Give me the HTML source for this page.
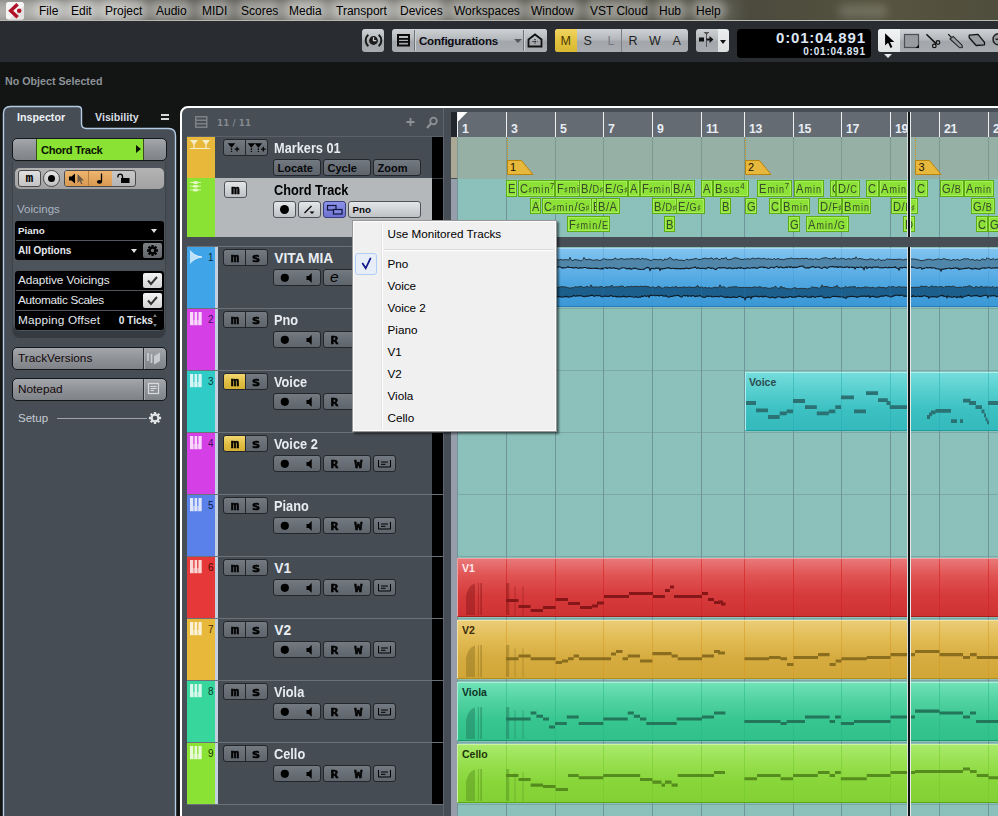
<!DOCTYPE html>
<html><head><meta charset="utf-8"><title>Cubase</title>
<style>
*{box-sizing:border-box}
html,body{margin:0;padding:0}
body{width:998px;height:816px;overflow:hidden;background:#131514;position:relative;font-family:"Liberation Sans",sans-serif;font-size:12px;color:#000}
.a{position:absolute}
.t{position:absolute;white-space:nowrap;line-height:1}
#menubar{left:0;top:0;width:998px;height:20px;background:linear-gradient(90deg,#3a3932,#45443a 40%,#4b4a3d 75%,#56543f 90%,#4f4d3c);overflow:hidden}
#menubar .glow{position:absolute;top:0px;height:20px;border-radius:9px;background:rgba(255,255,255,.36);filter:blur(4px)}
#menubar .mi{position:absolute;top:5px;font-size:12px;color:#000;white-space:nowrap;line-height:1}
#toolbar{left:0;top:21px;width:998px;height:41px;background:#292c30}
.tb{position:absolute;border-radius:3px;background:linear-gradient(#cfd2d5,#b4b8bc 45%,#a3a7ab 55%,#a9adb1)}

#insp{left:0;top:100px;width:180px;height:716px}
.ibtn{position:absolute;left:12px;width:155px;height:23px;border-radius:5px;border:1px solid #15181b;background:linear-gradient(#a3a7ab,#8d9195 55%,#7f8387)}
.blk{position:absolute;left:15px;width:149px;background:#000;border-radius:3px}
.wl{color:#e4e8ee}

#tl{left:180px;top:106px;width:270px;height:720px}
.row{position:absolute;left:7px;width:258px}
.sb{position:absolute;height:17px;border-radius:3px;border:1px solid #23272b;background:linear-gradient(#747a81,#6a7077 40%,#5f656c)}
.lb{position:absolute;height:17px;border-radius:3px;border:1px solid #50545a;background:linear-gradient(#e4e6e8,#bfc2c5)}
.pix{font-family:"DejaVu Sans","Liberation Sans",sans-serif;font-weight:bold;color:#000;position:absolute;line-height:1;white-space:nowrap}
.tn{position:absolute;left:274.300px;font-size:13.800px;font-weight:bold;color:#e8ecf1;white-space:nowrap;line-height:1;display:inline-block}
.g{-webkit-text-stroke:.45px #000;position:absolute;font-family:"DejaVu Sans Mono","Liberation Mono",monospace;font-weight:bold;color:#000;line-height:1;white-space:nowrap;text-align:center}
.num{position:absolute;font-size:10px;line-height:1;white-space:nowrap}

#ev{left:451px;top:108px;width:547px;height:708px;overflow:hidden}
.ch{position:absolute;height:16.300px;background:#8ce236;border:1px solid #5cac12;box-shadow:inset 0 0 0 1px #a6ee5c;overflow:hidden;white-space:nowrap;color:#3a4a2c;font-size:12.800px;line-height:15px;padding-left:1px}
.ch b{font-weight:normal;display:inline-block;transform:scaleX(.87);transform-origin:0 50%;letter-spacing:.6px}
.ch small{font-size:10.300px;letter-spacing:1.300px;margin-left:.5px}
.ch u{text-decoration:none;font-size:10.500px}
.ch sup{font-size:9px;vertical-align:0;position:relative;top:-4px;line-height:0;margin-left:-.5px}
.ch i{font-style:normal;font-size:7.500px;position:relative;top:-1.500px;letter-spacing:0;margin:0 .5px 0 0}
.rn{position:absolute;top:122.500px;font-size:12.300px;letter-spacing:-.4px;font-weight:bold;color:#e8edf4;line-height:1;white-space:nowrap}
.pl{position:absolute;font-size:10.500px;font-weight:bold;line-height:1;white-space:nowrap}

#pop{left:352px;top:220px;width:205px;height:212px;background:#f0f0f0;border:1px solid #979797;box-shadow:inset 0 0 0 1px #fcfcfc,2px 2px 2px rgba(0,0,0,.5)}
.pi{position:absolute;left:387.500px;font-size:11.700px;color:#000;line-height:1;white-space:nowrap}
</style></head>
<body>
<div id="menubar" class="a"><div class="glow" style="left:-20px;width:760px;top:-4px;height:30px;background:linear-gradient(90deg,rgba(255,255,255,.62),rgba(255,255,255,.58) 18%,rgba(255,255,255,.26) 24%,rgba(255,255,255,.24) 36%,rgba(255,255,255,.46) 42%,rgba(255,255,255,.42) 58%,rgba(255,255,255,.22) 66%,rgba(255,255,255,.12) 85%,rgba(255,255,255,.1));filter:blur(7px)"></div><div class="glow" style="left:34px;width:28px"></div><div class="glow" style="left:66px;width:30px"></div><div class="glow" style="left:100px;width:47px"></div><div class="glow" style="left:151px;width:41px"></div><div class="glow" style="left:197px;width:35px"></div><div class="glow" style="left:236px;width:43px"></div><div class="glow" style="left:284px;width:41px"></div><div class="glow" style="left:331px;width:61px"></div><div class="glow" style="left:395px;width:50px"></div><div class="glow" style="left:449px;width:75px"></div><div class="glow" style="left:526px;width:55px"></div><div class="glow" style="left:585px;width:65px"></div><div class="glow" style="left:654px;width:33px"></div><div class="glow" style="left:691px;width:35px"></div><div class="glow" style="left:838px;width:50px;opacity:.45;top:4px;height:14px"></div><span class="mi" style="left:39px">File</span><span class="mi" style="left:71px">Edit</span><span class="mi" style="left:105px">Project</span><span class="mi" style="left:156px">Audio</span><span class="mi" style="left:202px">MIDI</span><span class="mi" style="left:241px">Scores</span><span class="mi" style="left:289px">Media</span><span class="mi" style="left:336px">Transport</span><span class="mi" style="left:400px">Devices</span><span class="mi" style="left:454px">Workspaces</span><span class="mi" style="left:531px">Window</span><span class="mi" style="left:590px">VST Cloud</span><span class="mi" style="left:659px">Hub</span><span class="mi" style="left:696px">Help</span><svg class="a" style="left:6px;top:2px" width="18" height="18" viewBox="0 0 18 18"><rect x="0" y="0" width="18" height="17.500" rx="2.500" fill="#f6f5f4"/><path d="M18 4V15a2.500 2.500 0 0 1-2.500 2.500H3z" fill="#e4e2e0"/><path d="M10.400 .9L2.200 8.700L10.400 16.500L12.800 14L7.200 8.700L12.800 3.400Z" fill="#b01228"/><circle cx="13.200" cy="8.700" r="2.300" fill="#b01228"/></svg></div><div class="a" style="left:0;top:20px;width:998px;height:1px;background:#b9b8b2"></div><div id="toolbar" class="a"><div class="tb" style="left:362px;top:8px;width:22px;height:23px;"><svg width="23" height="23" viewBox="0 0 23 23" class="a" style="left:0;top:0"><circle cx="11.500" cy="11.500" r="4.400" fill="#1a1a1a"/><path d="M11.500 8.300v3.400h2.800" stroke="#d0d0d0" stroke-width="1.300" fill="none"/><path d="M6.300 5.800a7.500 7.500 0 0 0 0 11.400M16.700 5.800a7.500 7.500 0 0 1 0 11.400" stroke="#1a1a1a" stroke-width="2" fill="none"/></svg></div><div class="tb" style="left:392px;top:8px;width:155px;height:23px;"></div><div class="a" style="left:414px;top:9px;width:1px;height:21px;background:#6f7377"></div><div class="a" style="left:415px;top:9px;width:1px;height:21px;background:#cfd2d5"></div><svg class="a" style="left:397px;top:13px" width="13" height="13" viewBox="0 0 13 13"><rect x="1" y="1" width="11" height="10.500" fill="none" stroke="#0c0c0c" stroke-width="2"/><rect x="1" y="4" width="11" height="1.800" fill="#0c0c0c"/><rect x="1" y="7" width="11" height="1.800" fill="#0c0c0c"/></svg><span class="t" style="left:419px;top:14px;font-size:11.6px;font-weight:bold;color:#0c0c14;letter-spacing:-.25px">Configurations</span><div class="a" style="left:514px;top:18px;border:4px solid transparent;border-top:4px solid #55585c;border-bottom:0"></div><div class="a" style="left:523px;top:9px;width:1px;height:21px;background:#6f7377"></div><div class="a" style="left:524px;top:9px;width:1px;height:21px;background:#cfd2d5"></div><div class="tb" style="left:525px;top:8px;width:22px;height:23px;"><svg width="22" height="21" viewBox="0 0 22 21" class="a" style="left:-1px;top:1px"><path d="M4.5 16.5V9.5L11 4.5l6.500 5v7z" fill="none" stroke="#111" stroke-width="1.8"/><path d="M11 9v5M8.500 11.500h5" stroke="#111" stroke-width="1.2" stroke-dasharray="1.2 1"/></svg></div><div class="tb" style="left:555px;top:8px;width:133px;height:23px;overflow:hidden"><div class="a" style="left:0;top:0;width:22px;height:23px;background:linear-gradient(#f0d560,#e3c440 50%,#d9b832)"></div><div class="a" style="left:66px;top:0;width:1px;height:23px;background:#7c8084"></div></div><span class="t" style="left:560.5px;top:13.500px;font-size:12.500px;color:#4a3a00">M</span><span class="t" style="left:583.5px;top:13.500px;font-size:12.500px;color:#222">S</span><span class="t" style="left:607.5px;top:13.500px;font-size:12.500px;color:#777b80">L</span><span class="t" style="left:628.5px;top:13.500px;font-size:12.500px;color:#222">R</span><span class="t" style="left:649px;top:13.500px;font-size:12.500px;color:#222">W</span><span class="t" style="left:672.5px;top:13.500px;font-size:12.500px;color:#222">A</span><div class="tb" style="left:696px;top:8px;width:23px;height:23px;border-radius:3px 0 0 3px"><svg width="21" height="21" viewBox="0 0 21 21" class="a" style="left:0;top:0"><path d="M10.500 3v15" stroke="#555" stroke-width="1"/><path d="M7.500 3h6l-3 3z" fill="#555"/><rect x="3" y="8.500" width="5" height="4" fill="#111"/><path d="M10.500 9.500h3V7l4 3.500l-4 3.500v-2.500h-3z" fill="#111"/></svg></div><div class="a" style="left:718px;top:8px;width:11px;height:23px;background:linear-gradient(#ecedee,#dcdee0);border-radius:0 3px 3px 0"></div><div class="a" style="left:720px;top:19px;border:3.500px solid transparent;border-top:4px solid #111;border-bottom:0"></div><div class="a" style="left:737px;top:8px;width:134px;height:29px;background:#000;border-radius:4px"></div><span class="t" style="right:133px;top:9.100px;font-size:15px;font-weight:bold;color:#dde6f4;letter-spacing:.8px;margin-right:-.8px">0:01:04.891</span><span class="t" style="right:133px;top:26.100px;font-size:10px;font-weight:bold;color:#dde6f4;letter-spacing:.78px;margin-right:-.8px">0:01:04.891</span><div class="tb" style="left:878px;top:8px;width:130px;height:23px;border-radius:3px 0 0 3px;overflow:hidden"><div class="a" style="left:0;top:0;width:22px;height:23px;background:linear-gradient(#f2f3f4,#e0e2e4)"></div></div><svg class="a" style="left:878px;top:8px" width="120" height="23" viewBox="0 0 120 23"><path d="M7.100 4.300v12.200l3-2.800 2.400 5.300 1.900-.9-2.400-5.100h4.300z" fill="#000"/><rect x="26.500" y="5.500" width="14" height="13" fill="#989ca0" stroke="#4c5054" stroke-width="1.200"/><path d="M41 15.500v3.500h-3.500z" fill="#0a0a0a"/><path d="M48.400 5.200L58 14.600" stroke="#111" stroke-width="1.500" fill="none"/><circle cx="56.300" cy="16.900" r="1.800" fill="none" stroke="#111" stroke-width="1.200"/><circle cx="60" cy="13.500" r="1.800" fill="none" stroke="#111" stroke-width="1.200"/><path d="M70.200 5.200l3.300 3.300" stroke="#111" stroke-width="1.200"/><path d="M72 10l3.200-2.600 8.800 8.800.3 2.300-2.600.3z" fill="#989ca0" stroke="#222" stroke-width="1.100"/><path d="M91.200 6.200l8.800-.9 6.500 8v2.500l-8.300.7-7-7.700z" fill="#989ca0" stroke="#111" stroke-width="1.300" stroke-linejoin="round"/><circle cx="120.600" cy="10.300" r="5.600" fill="#989ca0" stroke="#222" stroke-width="1.500"/><path d="M117.500 10.300h5" stroke="#222" stroke-width="1.500"/></svg><div class="a" style="left:884px;top:33px;border:4px solid transparent;border-top:4px solid #e8e8e8;border-bottom:0"></div></div><span class="t" style="left:5px;top:76px;font-size:10.7px;font-weight:bold;color:#8d9298">No Object Selected</span>
<div id="insp" class="a"><svg class="a" style="left:0;top:0" width="180" height="716" viewBox="0 0 180 716"><path d="M3.5 716V13.500Q3.5 6.500 10.500 6.500H78Q81.500 6.500 81.500 10V23.500Q81.500 28.500 86.500 28.500H168.500Q175.500 28.500 175.500 35.500V716" fill="#464d55" stroke="#b4cbe4" stroke-width="1.400"/></svg><span class="t" style="left:17px;top:12px;font-size:10.700px;font-weight:bold;color:#eef2f7">Inspector</span><span class="t" style="left:95px;top:12px;font-size:10.700px;font-weight:bold;color:#d6dbe2">Visibility</span><div class="a" style="left:161px;top:14px;width:8px;height:2px;background:#d8d8d8"></div><div class="a" style="left:161px;top:18px;width:8px;height:2px;background:#d8d8d8"></div><div class="ibtn" style="top:38px;overflow:hidden"><div class="a" style="left:23px;top:0;width:108px;height:21px;background:#8ae234;border-left:1px solid #3c4a20;border-right:1px solid #3c4a20"></div></div><span class="t" style="left:41px;top:44.800px;font-size:11.200px;letter-spacing:-.35px;font-weight:bold;color:#0a1400">Chord Track</span><div class="a" style="left:136px;top:45px;border:4px solid transparent;border-left:5px solid #0a1400;border-right:0"></div><div class="a" style="left:12px;top:62px;width:154px;height:176px;background:#4c535a;border-left:1px solid #3c4349;border-right:1px solid #3c4349;border-radius:0 0 7px 7px;box-shadow:inset 0 -7px 0 -0px #353b41"></div><div class="a" style="left:15px;top:68px;width:149px;height:21px;border-radius:5px;background:linear-gradient(#b3b3b3,#a2a2a2)"></div><div class="a" style="left:18px;top:70px;width:23px;height:17px;border-radius:3px;border:1px solid #4a4a4a;background:linear-gradient(#e0e0e0,#c4c4c4)"></div><span class="t" style="left:25.500px;top:70.500px;font-size:13px;font-weight:bold;color:#000;font-family:'DejaVu Sans Mono',monospace">m</span><div class="a" style="left:43px;top:70px;width:17px;height:17px;border-radius:9px;border:1px solid #4a4a4a;background:linear-gradient(#e6e6e6,#c0c0c0)"></div><div class="a" style="left:48px;top:75px;width:7px;height:7px;border-radius:4px;background:#000"></div><div class="a" style="left:64px;top:70px;width:72px;height:17px;border-radius:3px;border:1px solid #4a4a4a;background:linear-gradient(#c9c9c9,#b4b4b4);overflow:hidden"><div class="a" style="left:0;top:0;width:47px;height:15px;background:linear-gradient(#efb570,#d99a50)"></div><div class="a" style="left:23px;top:0;width:1px;height:15px;background:#b88040"></div></div><svg class="a" style="left:64px;top:70px" width="72" height="17" viewBox="0 0 72 17"><path d="M5 6.500h2.500l3.500-3v10l-3.500-3H5z" fill="#000"/><path d="M13.500 4v9l2.200-2 1.500 3.300 1.300-.6-1.500-3.200h3z" fill="#6b5a48"/><path d="M37.500 3.500v8" stroke="#000" stroke-width="1.300"/><ellipse cx="35.500" cy="11.800" rx="2.600" ry="1.900" fill="#000"/><rect x="57" y="8" width="8.500" height="5" fill="#000"/><path d="M58.500 8V6.500a2.300 2.300 0 0 0-4.600 0v1" fill="none" stroke="#000" stroke-width="1.300"/></svg><span class="t" style="left:17px;top:104px;font-size:11.5px;color:#aab4c2">Voicings</span><div class="blk" style="top:121px;height:39px"></div><div class="a" style="left:16px;top:140px;width:147px;height:1px;background:#50565c"></div><span class="t wl" style="left:18px;top:125.500px;font-size:9.800px;font-weight:bold">Piano</span><div class="a" style="left:151px;top:129px;border:3.500px solid transparent;border-top:4px solid #e0e0e0;border-bottom:0"></div><span class="t wl" style="left:18px;top:145.500px;font-size:10px;font-weight:bold">All Options</span><div class="a" style="left:131px;top:149px;border:3.500px solid transparent;border-top:4px solid #e0e0e0;border-bottom:0"></div><div class="a" style="left:143px;top:143px;width:19px;height:15px;border-radius:2px;background:linear-gradient(#7c8084,#64686c)"></div><svg class="a" style="left:0;top:0;overflow:visible" width="1" height="1"><path d="M155.50 150.50L158.00 150.50M154.62 152.62L156.39 154.39M152.50 153.50L152.50 156.00M150.38 152.62L148.61 154.39M149.50 150.50L147.00 150.50M150.38 148.38L148.61 146.61M152.50 147.50L152.50 145.00M154.62 148.38L156.39 146.61" stroke="#000" stroke-width="2.300" fill="none"/><circle cx="152.5" cy="150.5" r="2.80" fill="none" stroke="#000" stroke-width="2.200"/></svg><div class="blk" style="top:171px;height:59px"></div><div class="a" style="left:16px;top:190px;width:147px;height:1px;background:#50565c"></div><div class="a" style="left:16px;top:210px;width:147px;height:1px;background:#50565c"></div><span class="t wl" style="left:18px;top:175px;font-size:11.800px;letter-spacing:-.09px">Adaptive Voicings</span><span class="t wl" style="left:18px;top:195px;font-size:11.800px;letter-spacing:-.33px">Automatic Scales</span><span class="t wl" style="left:18px;top:215px;font-size:11.800px;letter-spacing:.17px">Mapping Offset</span><span class="t wl" style="right:27px;top:215.500px;font-size:10.200px;font-weight:bold">0 Ticks</span><div class="a" style="left:143px;top:173px;width:19px;height:15px;border-radius:2px;background:linear-gradient(#f4f4f4,#d4d4d4)"></div><svg class="a" style="left:143px;top:173px" width="19" height="15" viewBox="0 0 19 15"><path d="M5 7.500l3 3.500 6-7" fill="none" stroke="#333" stroke-width="2"/></svg><div class="a" style="left:143px;top:193px;width:19px;height:15px;border-radius:2px;background:linear-gradient(#f4f4f4,#d4d4d4)"></div><svg class="a" style="left:143px;top:193px" width="19" height="15" viewBox="0 0 19 15"><path d="M5 7.500l3 3.500 6-7" fill="none" stroke="#333" stroke-width="2"/></svg><div class="a" style="left:153px;top:214px;border:2.500px solid transparent;border-bottom:3px solid #777;border-top:0"></div><div class="a" style="left:153px;top:224px;border:2.500px solid transparent;border-top:3px solid #777;border-bottom:0"></div><div class="ibtn" style="top:247px"><div class="a" style="left:130px;top:0;width:1px;height:21px;background:#2a2d30"></div><div class="a" style="left:131px;top:0;width:1px;height:21px;background:#a8acb0"></div></div><span class="t" style="left:18px;top:253.3px;font-size:11.800px;color:#14080c">TrackVersions</span><div class="ibtn" style="top:278px"><div class="a" style="left:130px;top:0;width:1px;height:21px;background:#2a2d30"></div><div class="a" style="left:131px;top:0;width:1px;height:21px;background:#a8acb0"></div></div><span class="t" style="left:18px;top:284.3px;font-size:11.800px;color:#14080c">Notepad</span><svg class="a" style="left:145px;top:250px" width="18" height="17" viewBox="0 0 18 17"><path d="M3 3v8M6.500 4v9" stroke="#c8ccd0" stroke-width="1.700"/><path d="M9 6l6-3.500v8.500l-6 3.500z" fill="#c8ccd0"/></svg><svg class="a" style="left:147px;top:282px" width="14" height="14" viewBox="0 0 14 14"><rect x="1.500" y="1.500" width="10" height="10" fill="none" stroke="#d8dce0" stroke-width="1.200"/><path d="M3.500 4.500h6M3.500 6.500h6M3.500 8.500h3.500" stroke="#d8dce0" stroke-width="1"/></svg><span class="t" style="left:18px;top:313px;font-size:11.500px;color:#c6ccd4">Setup</span><div class="a" style="left:57px;top:318px;width:90px;height:1px;background:#9ea4aa"></div><svg class="a" style="left:0;top:0;overflow:visible" width="1" height="1"><path d="M158.60 318.00L161.10 318.00M157.55 320.55L159.31 322.31M155.00 321.60L155.00 324.10M152.45 320.55L150.69 322.31M151.40 318.00L148.90 318.00M152.45 315.45L150.69 313.69M155.00 314.40L155.00 311.90M157.55 315.45L159.31 313.69" stroke="#e0e2e4" stroke-width="2.300" fill="none"/><circle cx="155" cy="318" r="3.40" fill="none" stroke="#e0e2e4" stroke-width="2.200"/></svg></div>
<div class="a" style="left:180px;top:106px;width:830px;height:730px;border:2px solid #fff;border-radius:8px 0 0 0;background:#474e56"></div><svg class="a" style="left:195px;top:116px" width="13" height="13" viewBox="0 0 13 13"><rect x=".750" y=".750" width="11" height="10.500" fill="none" stroke="#7d8185" stroke-width="1.500"/><path d="M1 4.300h11M1 7.700h11" stroke="#7d8185" stroke-width="1.500"/></svg><span class="t" style="left:217px;top:119.200px;font-size:8.700px;font-weight:bold;color:#868a8e;font-family:'DejaVu Sans',sans-serif;letter-spacing:.1px">11 / 11</span><svg class="a" style="left:405px;top:115px" width="36" height="15" viewBox="0 0 36 15"><path d="M5.500 3v8M1.500 7h8" stroke="#8d9195" stroke-width="1.800"/><circle cx="28.500" cy="6" r="3.300" fill="none" stroke="#8d9195" stroke-width="1.800"/><path d="M26 8.500l-4 4.500" stroke="#8d9195" stroke-width="2.200"/></svg><div class="a" style="left:187px;top:136px;width:256px;height:1px;background:#5a6168"></div><div class="a" style="left:432px;top:137px;width:11px;height:100px;background:#000"></div><div class="a" style="left:432px;top:247px;width:11px;height:557px;background:#000"></div><div class="a" style="left:443px;top:108px;width:1px;height:708px;background:#5d646b"></div><div class="a" style="left:444px;top:108px;width:7px;height:708px;background:#464d55"></div><div class="a" style="left:187px;top:137px;width:245px;height:41px;background:#454c54"></div><div class="a" style="left:187px;top:137px;width:28px;height:41px;background:#e8b83a"></div><svg class="a" style="left:189px;top:139px" width="23" height="12" viewBox="0 0 23 12"><path d="M1 1h8l-4 5zM13 1h8l-4 5z" fill="#f8ecc8"/><path d="M5 5v4M17 5v4M1 9.500h20" stroke="#f8ecc8" stroke-width="1.200" fill="none"/></svg><div class="sb" style="left:223px;top:139px;width:45px"><div class="a" style="left:21px;top:0;width:1px;height:15px;background:#23272b"></div></div><svg class="a" style="left:223px;top:139px" width="45" height="17" viewBox="0 0 45 17"><path d="M4.700 4.300h7.600l-2.900 3.400h-1.800z" fill="#000"/><path d="M8.500 7v6" stroke="#000" stroke-width="1.300" stroke-dasharray="1.600 .9"/><path d="M14 7.800v4.600M11.700 10.100h4.600" stroke="#000" stroke-width="1.200"/><path d="M24.700 4.300h7.400l-2.800 3.400h-1.800zM31.700 4.300h7.400l-2.800 3.400h-1.800z" fill="#000"/><path d="M28.400 7v6M35.400 7v6" stroke="#000" stroke-width="1.300" stroke-dasharray="1.600 .9"/><path d="M40.300 7.800v4.600M38 10.100h4.600" stroke="#000" stroke-width="1.200"/></svg><span class="tn" style="top:142.2px;transform:scaleX(.925);transform-origin:0 50%">Markers 01</span><div class="sb" style="left:273px;top:159px;width:48px"></div><span class="t" style="left:277.5px;top:162.800px;font-size:11px;font-weight:bold;color:#05070a">Locate</span><div class="sb" style="left:323px;top:159px;width:48px"></div><span class="t" style="left:327.5px;top:162.800px;font-size:11px;font-weight:bold;color:#05070a">Cycle</span><div class="sb" style="left:373px;top:159px;width:48px"></div><span class="t" style="left:377.5px;top:162.800px;font-size:11px;font-weight:bold;color:#05070a">Zoom</span><div class="a" style="left:432px;top:178px;width:11px;height:1px;background:#3a4047"></div><div class="a" style="left:187px;top:178px;width:245px;height:59px;background:#b5b8bb"></div><div class="a" style="left:187px;top:178px;width:28px;height:59px;background:#8ae234"></div><svg class="a" style="left:189px;top:180px" width="14" height="13" viewBox="0 0 14 13"><path d="M1 2.500h11M1 6.200h11M1 9.900h11" stroke="#d8f4b0" stroke-width="1"/><ellipse cx="6.500" cy="2.500" rx="2.800" ry="1.500" fill="#e4f8c4"/><ellipse cx="6.500" cy="6.200" rx="2.800" ry="1.500" fill="#e4f8c4"/><ellipse cx="6.500" cy="9.900" rx="2.800" ry="1.500" fill="#e4f8c4"/></svg><div class="lb" style="left:224px;top:181px;width:23px"></div><span class="g" style="left:224px;top:183.700px;width:23px;font-size:12.500px;transform:scaleX(1.12)">m</span><span class="tn" style="top:184.2px;color:#000;transform:scaleX(.925);transform-origin:0 50%">Chord Track</span><div class="lb" style="left:273px;top:201px;width:23px"></div><div class="a" style="left:280px;top:205px;width:9px;height:9px;border-radius:4.500px;background:#000"></div><div class="lb" style="left:298px;top:201px;width:23px"></div><svg class="a" style="left:298px;top:201px" width="23" height="17" viewBox="0 0 23 17"><path d="M6.500 12l7-7" stroke="#000" stroke-width="1.300"/><path d="M11.500 10.500h5l-2.500 2.500z" fill="#000"/></svg><div class="lb" style="left:323px;top:201px;width:23px;background:linear-gradient(#8c92e8,#6c72d0);border-color:#3a3e80"></div><svg class="a" style="left:323px;top:201px" width="23" height="17" viewBox="0 0 23 17"><rect x="4.500" y="4.500" width="8.500" height="4.500" fill="none" stroke="#10143c" stroke-width="1.200"/><rect x="10.500" y="8.500" width="8.500" height="4.500" fill="#8088e0" stroke="#10143c" stroke-width="1.200"/></svg><div class="lb" style="left:348px;top:201px;width:73px"></div><span class="t" style="left:352.500px;top:205px;font-size:9.800px;font-weight:bold;color:#08080c">Pno</span><div class="a" style="left:182px;top:237px;width:261px;height:9px;background:#464d55"></div><div class="a" style="left:187px;top:246px;width:256px;height:1px;background:#6a7178"></div><div class="a" style="left:187px;top:247px;width:245px;height:61px;background:#454c54"></div><div class="a" style="left:187px;top:247px;width:28px;height:61px;background:#3fa4e8"></div><div class="a" style="left:215px;top:247px;width:3px;height:61px;background:#c2d0e0"></div><svg class="a" style="left:189px;top:249.5px" width="14" height="15" viewBox="0 0 14 15"><path d="M1 .5Q5 6 13 7Q5 8 1 13.500z" fill="#d4ecfc" opacity=".85"/><path d="M1 .5Q5 6 13 7Q5 8 1 13.500" fill="none" stroke="#eaf6ff" stroke-width=".8"/></svg><span class="num" style="left:208px;top:252.6px;color:#0e2438">1</span><div class="sb" style="left:223px;top:249px;width:45px;overflow:hidden"><div class="a" style="left:21px;top:0;width:1px;height:15px;background:#23272b"></div></div><span class="g" style="left:224px;top:251.7px;width:22px;font-size:12.500px;transform:scaleX(1.12)">m</span><span class="g" style="left:245px;top:251.7px;width:22px;font-size:12.500px;transform:scaleX(1.2)">s</span><span class="tn" style="top:252.2px;letter-spacing:0">VITA MIA</span><div class="sb" style="left:273px;top:269px;width:48px"></div><svg class="a" style="left:273px;top:269px" width="48" height="17" viewBox="0 0 48 17"><circle cx="11.800" cy="8.800" r="4.100" fill="#000"/><path d="M33.5 6.9h2.200l3-2.800v9.600l-3-2.800H33.5z" fill="#000"/></svg><div class="sb" style="left:323px;top:269px;width:48px"></div><span class="t" style="left:330px;top:268.5px;font-size:15.500px;font-style:italic;color:#000">e</span><div class="a" style="left:187px;top:308px;width:256px;height:1px;background:#6a7178"></div><div class="a" style="left:187px;top:309px;width:245px;height:61px;background:#454c54"></div><div class="a" style="left:187px;top:309px;width:28px;height:61px;background:#d43fe6"></div><div class="a" style="left:215px;top:309px;width:3px;height:61px;background:#c2d0e0"></div><svg class="a" style="left:189.7px;top:311.8px" width="12" height="14" viewBox="0 0 12 14"><rect x="0" y="0" width="11.700" height="13.200" fill="#fff" opacity=".8"/><path d="M3.900 0v8M7.800 0v8" stroke="#d43fe6" stroke-width="1.300"/><path d="M3.900 8v5.200M7.800 8v5.200" stroke="#d43fe6" stroke-width=".6"/></svg><span class="num" style="left:208px;top:314.6px;color:#3c1060">2</span><div class="sb" style="left:223px;top:311px;width:45px;overflow:hidden"><div class="a" style="left:21px;top:0;width:1px;height:15px;background:#23272b"></div></div><span class="g" style="left:224px;top:313.7px;width:22px;font-size:12.500px;transform:scaleX(1.12)">m</span><span class="g" style="left:245px;top:313.7px;width:22px;font-size:12.500px;transform:scaleX(1.2)">s</span><span class="tn" style="top:314.2px;transform:scaleX(.925);transform-origin:0 50%">Pno</span><div class="sb" style="left:273px;top:331px;width:48px"></div><svg class="a" style="left:273px;top:331px" width="48" height="17" viewBox="0 0 48 17"><circle cx="11.800" cy="8.800" r="4.100" fill="#000"/><path d="M33.5 6.9h2.200l3-2.800v9.600l-3-2.800H33.5z" fill="#000"/></svg><div class="sb" style="left:323px;top:331px;width:48px"></div><span class="g" style="left:326px;top:335.2px;width:17px;font-size:10.300px;transform:scaleX(1.25)">R</span><span class="g" style="left:350px;top:335.2px;width:17px;font-size:10.300px;transform:scaleX(1.25)">W</span><div class="sb" style="left:373px;top:331px;width:23px"></div><svg class="a" style="left:373px;top:331px" width="23" height="17" viewBox="0 0 23 17"><path d="M5.500 5v7h12v-7M8 7h7M8 9.300h4.500" fill="none" stroke="#000" stroke-width="1"/></svg><div class="a" style="left:187px;top:370px;width:256px;height:1px;background:#6a7178"></div><div class="a" style="left:187px;top:371px;width:245px;height:61px;background:#454c54"></div><div class="a" style="left:187px;top:371px;width:28px;height:61px;background:#2fcbc6"></div><div class="a" style="left:215px;top:371px;width:3px;height:61px;background:#c2d0e0"></div><svg class="a" style="left:189.7px;top:373.8px" width="12" height="14" viewBox="0 0 12 14"><rect x="0" y="0" width="11.700" height="13.200" fill="#fff" opacity=".8"/><path d="M3.900 0v8M7.800 0v8" stroke="#2fcbc6" stroke-width="1.300"/><path d="M3.900 8v5.200M7.800 8v5.200" stroke="#2fcbc6" stroke-width=".6"/></svg><span class="num" style="left:208px;top:376.6px;color:#083836">3</span><div class="sb" style="left:223px;top:373px;width:45px;overflow:hidden"><div class="a" style="left:0;top:0;width:21px;height:15px;background:linear-gradient(#f2d870,#e0bc40 60%,#d4b034)"></div><div class="a" style="left:21px;top:0;width:1px;height:15px;background:#23272b"></div></div><span class="g" style="left:224px;top:375.7px;width:22px;font-size:12.500px;transform:scaleX(1.12)">m</span><span class="g" style="left:245px;top:375.7px;width:22px;font-size:12.500px;transform:scaleX(1.2)">s</span><span class="tn" style="top:376.2px;transform:scaleX(.925);transform-origin:0 50%">Voice</span><div class="sb" style="left:273px;top:393px;width:48px"></div><svg class="a" style="left:273px;top:393px" width="48" height="17" viewBox="0 0 48 17"><circle cx="11.800" cy="8.800" r="4.100" fill="#000"/><path d="M33.5 6.9h2.200l3-2.800v9.600l-3-2.800H33.5z" fill="#000"/></svg><div class="sb" style="left:323px;top:393px;width:48px"></div><span class="g" style="left:326px;top:397.2px;width:17px;font-size:10.300px;transform:scaleX(1.25)">R</span><span class="g" style="left:350px;top:397.2px;width:17px;font-size:10.300px;transform:scaleX(1.25)">W</span><div class="sb" style="left:373px;top:393px;width:23px"></div><svg class="a" style="left:373px;top:393px" width="23" height="17" viewBox="0 0 23 17"><path d="M5.500 5v7h12v-7M8 7h7M8 9.300h4.500" fill="none" stroke="#000" stroke-width="1"/></svg><div class="a" style="left:187px;top:432px;width:256px;height:1px;background:#6a7178"></div><div class="a" style="left:187px;top:433px;width:245px;height:61px;background:#454c54"></div><div class="a" style="left:187px;top:433px;width:28px;height:61px;background:#d43fe6"></div><div class="a" style="left:215px;top:433px;width:3px;height:61px;background:#c2d0e0"></div><svg class="a" style="left:189.7px;top:435.8px" width="12" height="14" viewBox="0 0 12 14"><rect x="0" y="0" width="11.700" height="13.200" fill="#fff" opacity=".8"/><path d="M3.900 0v8M7.800 0v8" stroke="#d43fe6" stroke-width="1.300"/><path d="M3.900 8v5.200M7.800 8v5.200" stroke="#d43fe6" stroke-width=".6"/></svg><span class="num" style="left:208px;top:438.6px;color:#3c1060">4</span><div class="sb" style="left:223px;top:435px;width:45px;overflow:hidden"><div class="a" style="left:0;top:0;width:21px;height:15px;background:linear-gradient(#f2d870,#e0bc40 60%,#d4b034)"></div><div class="a" style="left:21px;top:0;width:1px;height:15px;background:#23272b"></div></div><span class="g" style="left:224px;top:437.7px;width:22px;font-size:12.500px;transform:scaleX(1.12)">m</span><span class="g" style="left:245px;top:437.7px;width:22px;font-size:12.500px;transform:scaleX(1.2)">s</span><span class="tn" style="top:438.2px;transform:scaleX(.925);transform-origin:0 50%">Voice 2</span><div class="sb" style="left:273px;top:455px;width:48px"></div><svg class="a" style="left:273px;top:455px" width="48" height="17" viewBox="0 0 48 17"><circle cx="11.800" cy="8.800" r="4.100" fill="#000"/><path d="M33.5 6.9h2.200l3-2.800v9.600l-3-2.800H33.5z" fill="#000"/></svg><div class="sb" style="left:323px;top:455px;width:48px"></div><span class="g" style="left:326px;top:459.2px;width:17px;font-size:10.300px;transform:scaleX(1.25)">R</span><span class="g" style="left:350px;top:459.2px;width:17px;font-size:10.300px;transform:scaleX(1.25)">W</span><div class="sb" style="left:373px;top:455px;width:23px"></div><svg class="a" style="left:373px;top:455px" width="23" height="17" viewBox="0 0 23 17"><path d="M5.500 5v7h12v-7M8 7h7M8 9.300h4.500" fill="none" stroke="#000" stroke-width="1"/></svg><div class="a" style="left:187px;top:494px;width:256px;height:1px;background:#6a7178"></div><div class="a" style="left:187px;top:495px;width:245px;height:61px;background:#454c54"></div><div class="a" style="left:187px;top:495px;width:28px;height:61px;background:#5a80ea"></div><div class="a" style="left:215px;top:495px;width:3px;height:61px;background:#c2d0e0"></div><svg class="a" style="left:189.7px;top:497.8px" width="12" height="14" viewBox="0 0 12 14"><rect x="0" y="0" width="11.700" height="13.200" fill="#fff" opacity=".8"/><path d="M3.900 0v8M7.800 0v8" stroke="#5a80ea" stroke-width="1.300"/><path d="M3.900 8v5.200M7.800 8v5.200" stroke="#5a80ea" stroke-width=".6"/></svg><span class="num" style="left:208px;top:500.6px;color:#101a40">5</span><div class="sb" style="left:223px;top:497px;width:45px;overflow:hidden"><div class="a" style="left:21px;top:0;width:1px;height:15px;background:#23272b"></div></div><span class="g" style="left:224px;top:499.7px;width:22px;font-size:12.500px;transform:scaleX(1.12)">m</span><span class="g" style="left:245px;top:499.7px;width:22px;font-size:12.500px;transform:scaleX(1.2)">s</span><span class="tn" style="top:500.2px;transform:scaleX(.925);transform-origin:0 50%">Piano</span><div class="sb" style="left:273px;top:517px;width:48px"></div><svg class="a" style="left:273px;top:517px" width="48" height="17" viewBox="0 0 48 17"><circle cx="11.800" cy="8.800" r="4.100" fill="#000"/><path d="M33.5 6.9h2.200l3-2.800v9.600l-3-2.800H33.5z" fill="#000"/></svg><div class="sb" style="left:323px;top:517px;width:48px"></div><span class="g" style="left:326px;top:521.2px;width:17px;font-size:10.300px;transform:scaleX(1.25)">R</span><span class="g" style="left:350px;top:521.2px;width:17px;font-size:10.300px;transform:scaleX(1.25)">W</span><div class="sb" style="left:373px;top:517px;width:23px"></div><svg class="a" style="left:373px;top:517px" width="23" height="17" viewBox="0 0 23 17"><path d="M5.500 5v7h12v-7M8 7h7M8 9.300h4.500" fill="none" stroke="#000" stroke-width="1"/></svg><div class="a" style="left:187px;top:556px;width:256px;height:1px;background:#6a7178"></div><div class="a" style="left:187px;top:557px;width:245px;height:61px;background:#454c54"></div><div class="a" style="left:187px;top:557px;width:28px;height:61px;background:#e63838"></div><div class="a" style="left:215px;top:557px;width:3px;height:61px;background:#c2d0e0"></div><svg class="a" style="left:189.7px;top:559.8px" width="12" height="14" viewBox="0 0 12 14"><rect x="0" y="0" width="11.700" height="13.200" fill="#fff" opacity=".8"/><path d="M3.900 0v8M7.800 0v8" stroke="#e63838" stroke-width="1.300"/><path d="M3.900 8v5.200M7.800 8v5.200" stroke="#e63838" stroke-width=".6"/></svg><span class="num" style="left:208px;top:562.6px;color:#400808">6</span><div class="sb" style="left:223px;top:559px;width:45px;overflow:hidden"><div class="a" style="left:21px;top:0;width:1px;height:15px;background:#23272b"></div></div><span class="g" style="left:224px;top:561.7px;width:22px;font-size:12.500px;transform:scaleX(1.12)">m</span><span class="g" style="left:245px;top:561.7px;width:22px;font-size:12.500px;transform:scaleX(1.2)">s</span><span class="tn" style="top:562.2px;letter-spacing:0">V1</span><div class="sb" style="left:273px;top:579px;width:48px"></div><svg class="a" style="left:273px;top:579px" width="48" height="17" viewBox="0 0 48 17"><circle cx="11.800" cy="8.800" r="4.100" fill="#000"/><path d="M33.5 6.9h2.200l3-2.800v9.600l-3-2.800H33.5z" fill="#000"/></svg><div class="sb" style="left:323px;top:579px;width:48px"></div><span class="g" style="left:326px;top:583.2px;width:17px;font-size:10.300px;transform:scaleX(1.25)">R</span><span class="g" style="left:350px;top:583.2px;width:17px;font-size:10.300px;transform:scaleX(1.25)">W</span><div class="sb" style="left:373px;top:579px;width:23px"></div><svg class="a" style="left:373px;top:579px" width="23" height="17" viewBox="0 0 23 17"><path d="M5.500 5v7h12v-7M8 7h7M8 9.300h4.500" fill="none" stroke="#000" stroke-width="1"/></svg><div class="a" style="left:187px;top:618px;width:256px;height:1px;background:#6a7178"></div><div class="a" style="left:187px;top:619px;width:245px;height:61px;background:#454c54"></div><div class="a" style="left:187px;top:619px;width:28px;height:61px;background:#e8b83a"></div><div class="a" style="left:215px;top:619px;width:3px;height:61px;background:#c2d0e0"></div><svg class="a" style="left:189.7px;top:621.8px" width="12" height="14" viewBox="0 0 12 14"><rect x="0" y="0" width="11.700" height="13.200" fill="#fff" opacity=".8"/><path d="M3.900 0v8M7.800 0v8" stroke="#e8b83a" stroke-width="1.300"/><path d="M3.900 8v5.200M7.800 8v5.200" stroke="#e8b83a" stroke-width=".6"/></svg><span class="num" style="left:208px;top:624.6px;color:#3c2c06">7</span><div class="sb" style="left:223px;top:621px;width:45px;overflow:hidden"><div class="a" style="left:21px;top:0;width:1px;height:15px;background:#23272b"></div></div><span class="g" style="left:224px;top:623.7px;width:22px;font-size:12.500px;transform:scaleX(1.12)">m</span><span class="g" style="left:245px;top:623.7px;width:22px;font-size:12.500px;transform:scaleX(1.2)">s</span><span class="tn" style="top:624.2px;letter-spacing:0">V2</span><div class="sb" style="left:273px;top:641px;width:48px"></div><svg class="a" style="left:273px;top:641px" width="48" height="17" viewBox="0 0 48 17"><circle cx="11.800" cy="8.800" r="4.100" fill="#000"/><path d="M33.5 6.9h2.200l3-2.800v9.600l-3-2.800H33.5z" fill="#000"/></svg><div class="sb" style="left:323px;top:641px;width:48px"></div><span class="g" style="left:326px;top:645.2px;width:17px;font-size:10.300px;transform:scaleX(1.25)">R</span><span class="g" style="left:350px;top:645.2px;width:17px;font-size:10.300px;transform:scaleX(1.25)">W</span><div class="sb" style="left:373px;top:641px;width:23px"></div><svg class="a" style="left:373px;top:641px" width="23" height="17" viewBox="0 0 23 17"><path d="M5.500 5v7h12v-7M8 7h7M8 9.300h4.500" fill="none" stroke="#000" stroke-width="1"/></svg><div class="a" style="left:187px;top:680px;width:256px;height:1px;background:#6a7178"></div><div class="a" style="left:187px;top:681px;width:245px;height:61px;background:#454c54"></div><div class="a" style="left:187px;top:681px;width:28px;height:61px;background:#36d69c"></div><div class="a" style="left:215px;top:681px;width:3px;height:61px;background:#c2d0e0"></div><svg class="a" style="left:189.7px;top:683.8px" width="12" height="14" viewBox="0 0 12 14"><rect x="0" y="0" width="11.700" height="13.200" fill="#fff" opacity=".8"/><path d="M3.900 0v8M7.800 0v8" stroke="#36d69c" stroke-width="1.300"/><path d="M3.900 8v5.200M7.800 8v5.200" stroke="#36d69c" stroke-width=".6"/></svg><span class="num" style="left:208px;top:686.6px;color:#063c28">8</span><div class="sb" style="left:223px;top:683px;width:45px;overflow:hidden"><div class="a" style="left:21px;top:0;width:1px;height:15px;background:#23272b"></div></div><span class="g" style="left:224px;top:685.7px;width:22px;font-size:12.500px;transform:scaleX(1.12)">m</span><span class="g" style="left:245px;top:685.7px;width:22px;font-size:12.500px;transform:scaleX(1.2)">s</span><span class="tn" style="top:686.2px;transform:scaleX(.925);transform-origin:0 50%">Viola</span><div class="sb" style="left:273px;top:703px;width:48px"></div><svg class="a" style="left:273px;top:703px" width="48" height="17" viewBox="0 0 48 17"><circle cx="11.800" cy="8.800" r="4.100" fill="#000"/><path d="M33.5 6.9h2.200l3-2.800v9.600l-3-2.800H33.5z" fill="#000"/></svg><div class="sb" style="left:323px;top:703px;width:48px"></div><span class="g" style="left:326px;top:707.2px;width:17px;font-size:10.300px;transform:scaleX(1.25)">R</span><span class="g" style="left:350px;top:707.2px;width:17px;font-size:10.300px;transform:scaleX(1.25)">W</span><div class="sb" style="left:373px;top:703px;width:23px"></div><svg class="a" style="left:373px;top:703px" width="23" height="17" viewBox="0 0 23 17"><path d="M5.500 5v7h12v-7M8 7h7M8 9.300h4.500" fill="none" stroke="#000" stroke-width="1"/></svg><div class="a" style="left:187px;top:742px;width:256px;height:1px;background:#6a7178"></div><div class="a" style="left:187px;top:743px;width:245px;height:61px;background:#454c54"></div><div class="a" style="left:187px;top:743px;width:28px;height:61px;background:#8ae234"></div><div class="a" style="left:215px;top:743px;width:3px;height:61px;background:#c2d0e0"></div><svg class="a" style="left:189.7px;top:745.8px" width="12" height="14" viewBox="0 0 12 14"><rect x="0" y="0" width="11.700" height="13.200" fill="#fff" opacity=".8"/><path d="M3.900 0v8M7.800 0v8" stroke="#8ae234" stroke-width="1.300"/><path d="M3.900 8v5.200M7.800 8v5.200" stroke="#8ae234" stroke-width=".6"/></svg><span class="num" style="left:208px;top:748.6px;color:#1c3806">9</span><div class="sb" style="left:223px;top:745px;width:45px;overflow:hidden"><div class="a" style="left:21px;top:0;width:1px;height:15px;background:#23272b"></div></div><span class="g" style="left:224px;top:747.7px;width:22px;font-size:12.500px;transform:scaleX(1.12)">m</span><span class="g" style="left:245px;top:747.7px;width:22px;font-size:12.500px;transform:scaleX(1.2)">s</span><span class="tn" style="top:748.2px;transform:scaleX(.925);transform-origin:0 50%">Cello</span><div class="sb" style="left:273px;top:765px;width:48px"></div><svg class="a" style="left:273px;top:765px" width="48" height="17" viewBox="0 0 48 17"><circle cx="11.800" cy="8.800" r="4.100" fill="#000"/><path d="M33.5 6.9h2.200l3-2.800v9.600l-3-2.800H33.5z" fill="#000"/></svg><div class="sb" style="left:323px;top:765px;width:48px"></div><span class="g" style="left:326px;top:769.2px;width:17px;font-size:10.300px;transform:scaleX(1.25)">R</span><span class="g" style="left:350px;top:769.2px;width:17px;font-size:10.300px;transform:scaleX(1.25)">W</span><div class="sb" style="left:373px;top:765px;width:23px"></div><svg class="a" style="left:373px;top:765px" width="23" height="17" viewBox="0 0 23 17"><path d="M5.500 5v7h12v-7M8 7h7M8 9.300h4.500" fill="none" stroke="#000" stroke-width="1"/></svg><div class="a" style="left:187px;top:804px;width:256px;height:1px;background:#6a7178"></div>
<div class="a" style="left:451px;top:108px;width:547px;height:4px;background:#474e56"></div><div class="a" style="left:451px;top:112px;width:7px;height:25px;background:#22272d"></div><div class="a" style="left:458px;top:112px;width:540px;height:25px;background:#656b73"></div><svg class="a" style="left:458px;top:112px" width="10" height="10" viewBox="0 0 10 10"><path d="M0 0h9.500L0 9.500z" fill="#fff"/></svg><div class="a" style="left:457px;top:112px;width:1px;height:24.500px;background:#eef0f2"></div><span class="rn" style="left:462px">1</span><div class="a" style="left:506px;top:112px;width:1px;height:24.500px;background:#eef0f2"></div><span class="rn" style="left:511px">3</span><div class="a" style="left:555px;top:112px;width:1px;height:24.500px;background:#eef0f2"></div><span class="rn" style="left:560px">5</span><div class="a" style="left:603px;top:112px;width:1px;height:24.500px;background:#eef0f2"></div><span class="rn" style="left:608px">7</span><div class="a" style="left:652px;top:112px;width:1px;height:24.500px;background:#eef0f2"></div><span class="rn" style="left:657px">9</span><div class="a" style="left:701px;top:112px;width:1px;height:24.500px;background:#eef0f2"></div><span class="rn" style="left:706px">11</span><div class="a" style="left:744px;top:112px;width:1px;height:24.500px;background:#eef0f2"></div><span class="rn" style="left:749px">13</span><div class="a" style="left:793px;top:112px;width:1px;height:24.500px;background:#eef0f2"></div><span class="rn" style="left:798px">15</span><div class="a" style="left:841px;top:112px;width:1px;height:24.500px;background:#eef0f2"></div><span class="rn" style="left:846px">17</span><div class="a" style="left:890px;top:112px;width:1px;height:24.500px;background:#eef0f2"></div><span class="rn" style="left:895px">19</span><div class="a" style="left:939px;top:112px;width:1px;height:24.500px;background:#eef0f2"></div><span class="rn" style="left:944px">21</span><div class="a" style="left:988px;top:112px;width:1px;height:24.500px;background:#eef0f2"></div><span class="rn" style="left:993px">23</span><div class="a" style="left:451px;top:137px;width:7px;height:41px;background:#aba996"></div><div class="a" style="left:458px;top:137px;width:540px;height:41.500px;background:#96b0a6"></div><div class="a" style="left:451px;top:178.500px;width:7px;height:58.500px;background:#969eac"></div><div class="a" style="left:458px;top:178.500px;width:540px;height:58.500px;background:#8bc0bb"></div><div class="a" style="left:451px;top:237px;width:547px;height:9.500px;background:#474e56"></div><div class="a" style="left:451px;top:246.500px;width:7px;height:570px;background:#969eac"></div><div class="a" style="left:458px;top:246.500px;width:540px;height:570px;background:#8bc0bb"></div><div class="a" style="left:458px;top:308.0px;width:540px;height:1px;background:#7ba8a6"></div><div class="a" style="left:458px;top:370.0px;width:540px;height:1px;background:#7ba8a6"></div><div class="a" style="left:458px;top:432.0px;width:540px;height:1px;background:#7ba8a6"></div><div class="a" style="left:458px;top:494.0px;width:540px;height:1px;background:#7ba8a6"></div><div class="a" style="left:458px;top:556.0px;width:540px;height:1px;background:#7ba8a6"></div><div class="a" style="left:458px;top:618.0px;width:540px;height:1px;background:#7ba8a6"></div><div class="a" style="left:458px;top:680.0px;width:540px;height:1px;background:#7ba8a6"></div><div class="a" style="left:458px;top:742.0px;width:540px;height:1px;background:#7ba8a6"></div><div class="a" style="left:458px;top:804.0px;width:540px;height:1px;background:#7ba8a6"></div><div class="a" style="left:457px;top:137px;width:1px;height:41.500px;background:#7d9a92"></div><div class="a" style="left:457px;top:178.500px;width:1px;height:58.500px;background:#70949a"></div><div class="a" style="left:457px;top:246.500px;width:1px;height:570px;background:#70949a"></div><div class="a" style="left:506px;top:137px;width:1px;height:41.500px;background:#7d9a92"></div><div class="a" style="left:506px;top:178.500px;width:1px;height:58.500px;background:#70949a"></div><div class="a" style="left:506px;top:246.500px;width:1px;height:570px;background:#70949a"></div><div class="a" style="left:555px;top:137px;width:1px;height:41.500px;background:#7d9a92"></div><div class="a" style="left:555px;top:178.500px;width:1px;height:58.500px;background:#70949a"></div><div class="a" style="left:555px;top:246.500px;width:1px;height:570px;background:#70949a"></div><div class="a" style="left:603px;top:137px;width:1px;height:41.500px;background:#7d9a92"></div><div class="a" style="left:603px;top:178.500px;width:1px;height:58.500px;background:#70949a"></div><div class="a" style="left:603px;top:246.500px;width:1px;height:570px;background:#70949a"></div><div class="a" style="left:652px;top:137px;width:1px;height:41.500px;background:#7d9a92"></div><div class="a" style="left:652px;top:178.500px;width:1px;height:58.500px;background:#70949a"></div><div class="a" style="left:652px;top:246.500px;width:1px;height:570px;background:#70949a"></div><div class="a" style="left:701px;top:137px;width:1px;height:41.500px;background:#7d9a92"></div><div class="a" style="left:701px;top:178.500px;width:1px;height:58.500px;background:#70949a"></div><div class="a" style="left:701px;top:246.500px;width:1px;height:570px;background:#70949a"></div><div class="a" style="left:744px;top:137px;width:1px;height:41.500px;background:#7d9a92"></div><div class="a" style="left:744px;top:178.500px;width:1px;height:58.500px;background:#70949a"></div><div class="a" style="left:744px;top:246.500px;width:1px;height:570px;background:#70949a"></div><div class="a" style="left:793px;top:137px;width:1px;height:41.500px;background:#7d9a92"></div><div class="a" style="left:793px;top:178.500px;width:1px;height:58.500px;background:#70949a"></div><div class="a" style="left:793px;top:246.500px;width:1px;height:570px;background:#70949a"></div><div class="a" style="left:841px;top:137px;width:1px;height:41.500px;background:#7d9a92"></div><div class="a" style="left:841px;top:178.500px;width:1px;height:58.500px;background:#70949a"></div><div class="a" style="left:841px;top:246.500px;width:1px;height:570px;background:#70949a"></div><div class="a" style="left:890px;top:137px;width:1px;height:41.500px;background:#7d9a92"></div><div class="a" style="left:890px;top:178.500px;width:1px;height:58.500px;background:#70949a"></div><div class="a" style="left:890px;top:246.500px;width:1px;height:570px;background:#70949a"></div><div class="a" style="left:939px;top:137px;width:1px;height:41.500px;background:#7d9a92"></div><div class="a" style="left:939px;top:178.500px;width:1px;height:58.500px;background:#70949a"></div><div class="a" style="left:939px;top:246.500px;width:1px;height:570px;background:#70949a"></div><div class="a" style="left:988px;top:137px;width:1px;height:41.500px;background:#7d9a92"></div><div class="a" style="left:988px;top:178.500px;width:1px;height:58.500px;background:#70949a"></div><div class="a" style="left:988px;top:246.500px;width:1px;height:570px;background:#70949a"></div><div class="a" style="left:506.5px;top:138px;width:0;height:23px;border-left:1px dotted #c89010"></div><svg class="a" style="left:506.5px;top:160px" width="28" height="15" viewBox="0 0 28 15"><path d="M.5 .5H14.500L26 14.500H.5z" fill="#e8b83c" stroke="#b88410" stroke-width="1"/></svg><span class="t" style="left:510.0px;top:162px;font-size:11px;color:#201400">1</span><div class="a" style="left:744.5px;top:138px;width:0;height:23px;border-left:1px dotted #c89010"></div><svg class="a" style="left:744.5px;top:160px" width="28" height="15" viewBox="0 0 28 15"><path d="M.5 .5H14.500L26 14.500H.5z" fill="#e8b83c" stroke="#b88410" stroke-width="1"/></svg><span class="t" style="left:748.0px;top:162px;font-size:11px;color:#201400">2</span><div class="a" style="left:915px;top:138px;width:0;height:23px;border-left:1px dotted #c89010"></div><svg class="a" style="left:915px;top:160px" width="28" height="15" viewBox="0 0 28 15"><path d="M.5 .5H14.500L26 14.500H.5z" fill="#e8b83c" stroke="#b88410" stroke-width="1"/></svg><span class="t" style="left:918.5px;top:162px;font-size:11px;color:#201400">3</span><div class="ch" style="left:505.7px;top:180.3px;width:11.8px"><b>E</b></div><div class="ch" style="left:517.7px;top:180.3px;width:37.8px"><b>C<i>♯</i><small>min</small><sup>7</sup></b></div><div class="ch" style="left:554.7px;top:180.3px;width:25.3px"><b>F<i>♯</i><small>min</small></b></div><div class="ch" style="left:579.2px;top:180.3px;width:24.8px"><b>B/<u>D</u><i>♯</i></b></div><div class="ch" style="left:603.2px;top:180.3px;width:25.3px"><b>E/<u>G</u><i>♯</i></b></div><div class="ch" style="left:628.2px;top:180.3px;width:11.8px"><b>A</b></div><div class="ch" style="left:640.2px;top:180.3px;width:31.8px"><b>F<i>♯</i><small>min</small></b></div><div class="ch" style="left:671.2px;top:180.3px;width:23.8px"><b>B/A</b></div><div class="ch" style="left:701.2px;top:180.3px;width:12.2px"><b>A</b></div><div class="ch" style="left:713.4px;top:180.3px;width:35.6px"><b>B<small>sus</small><sup>4</sup></b></div><div class="ch" style="left:756.5px;top:180.3px;width:35.0px"><b>E<small>min</small><sup>7</sup></b></div><div class="ch" style="left:794.0px;top:180.3px;width:30.0px"><b>A<small>min</small></b></div><div class="ch" style="left:829.5px;top:180.3px;width:6.5px"><b>C</b></div><div class="ch" style="left:836.0px;top:180.3px;width:24.0px"><b>D/<u>C</u></b></div><div class="ch" style="left:866.0px;top:180.3px;width:12.5px"><b>C</b></div><div class="ch" style="left:878.5px;top:180.3px;width:30.5px"><b>A<small>min</small></b></div><div class="ch" style="left:915.0px;top:180.3px;width:12.5px"><b>C</b></div><div class="ch" style="left:939.5px;top:180.3px;width:24.0px"><b>G/<u>B</u></b></div><div class="ch" style="left:963.5px;top:180.3px;width:30.0px"><b>A<small>min</small></b></div><div class="ch" style="left:529.7px;top:198.2px;width:11.8px"><b>A</b></div><div class="ch" style="left:542.2px;top:198.2px;width:49.8px"><b>C<i>♯</i><small>min</small>/<u>G</u><i>♯</i></b></div><div class="ch" style="left:590.7px;top:198.2px;width:6.8px"><b>B</b></div><div class="ch" style="left:596.2px;top:198.2px;width:24.3px"><b>B/A</b></div><div class="ch" style="left:651.7px;top:198.2px;width:25.3px"><b>B/<u>D</u><i>♯</i></b></div><div class="ch" style="left:676.2px;top:198.2px;width:28.8px"><b>E/<u>G</u><i>♯</i></b></div><div class="ch" style="left:719.5px;top:198.2px;width:11.0px"><b>B</b></div><div class="ch" style="left:744.5px;top:198.2px;width:12.5px"><b>G</b></div><div class="ch" style="left:768.5px;top:198.2px;width:12.0px"><b>C</b></div><div class="ch" style="left:780.5px;top:198.2px;width:29.0px"><b>B<small>min</small></b></div><div class="ch" style="left:817.5px;top:198.2px;width:24.0px"><b>D/<u>F</u><i>♯</i></b></div><div class="ch" style="left:841.5px;top:198.2px;width:29.5px"><b>B<small>min</small></b></div><div class="ch" style="left:890.5px;top:198.2px;width:27.5px"><b>D/<u>F</u><i>♯</i></b></div><div class="ch" style="left:970.5px;top:198.2px;width:24.0px"><b>G/<u>B</u></b></div><div class="ch" style="left:566.7px;top:216px;width:43.8px"><b>F<i>♯</i><small>min</small>/<u>E</u></b></div><div class="ch" style="left:663.7px;top:216px;width:11.8px"><b>B</b></div><div class="ch" style="left:787.5px;top:216px;width:12.0px"><b>G</b></div><div class="ch" style="left:805.5px;top:216px;width:43.0px"><b>A<small>min</small>/<u>G</u></b></div><div class="ch" style="left:902.5px;top:216px;width:12.0px"><b>D</b></div><div class="ch" style="left:976.0px;top:216px;width:12.0px"><b>C</b></div><div class="ch" style="left:988.0px;top:216px;width:14.0px"><b>G</b></div><div class="a" style="left:458px;top:248px;width:540px;height:58.500px;background:linear-gradient(#82c4f0,#6ab6ea 25%,#4ea6e0 60%,#3a98d6);border-top:1px solid #a8d8f8;border-bottom:1px solid #2a7cb8"></div><svg class="a" style="left:458px;top:248px" width="540" height="59" viewBox="0 0 540 59"><path d="M0 10.7 1 11.0 2 11.0 3 10.3 4 9.9 5 9.8 6 10.2 7 10.0 8 10.6 9 10.9 10 11.7 11 11.9 12 11.0 13 10.7 14 10.3 15 10.8 16 11.0 17 10.3 18 10.9 19 10.7 20 10.7 21 11.3 22 10.8 23 10.9 24 11.3 25 11.9 26 11.3 27 10.6 28 10.1 29 10.9 30 11.5 31 11.5 32 11.4 33 11.7 34 11.3 35 10.4 36 10.9 37 11.3 38 11.0 39 10.2 40 10.0 41 9.7 42 9.7 43 10.0 44 9.8 45 10.3 46 11.0 47 10.6 48 10.5 49 11.3 50 10.6 51 10.3 52 10.7 53 10.0 54 10.2 55 11.1 56 11.0 57 11.2 58 11.6 59 11.8 60 11.2 61 10.5 62 10.0 63 9.9 64 10.1 65 9.7 66 9.7 67 9.5 68 10.3 69 10.2 70 10.4 71 11.2 72 11.0 73 10.4 74 10.5 75 11.2 76 10.4 77 10.8 78 9.6 79 11.8 80 11.8 81 11.3 82 11.7 83 11.9 84 11.2 85 12.0 86 12.1 87 12.1 88 11.8 89 9.8 90 10.8 91 11.7 92 12.3 93 12.6 94 11.7 95 11.1 96 11.5 97 12.0 98 12.1 99 11.2 100 12.0 101 12.2 102 11.5 103 11.3 104 12.2 105 11.8 106 12.1 107 11.4 108 12.2 109 11.4 110 12.3 111 11.9 112 9.3 113 11.7 114 12.4 115 12.7 116 11.9 117 11.5 118 11.8 119 11.7 120 12.4 121 12.1 122 12.6 123 12.9 124 12.5 125 11.5 126 9.4 127 11.0 128 11.7 129 11.5 130 11.7 131 11.2 132 11.1 133 11.8 134 11.9 135 12.4 136 12.3 137 12.1 138 11.8 139 11.8 140 12.0 141 12.5 142 12.2 143 12.5 144 11.6 145 11.0 146 10.6 147 11.5 148 11.0 149 11.5 150 12.1 151 11.5 152 11.4 153 12.2 154 11.4 155 11.5 156 11.0 157 10.1 158 10.3 159 11.7 160 10.9 161 11.6 162 10.9 163 10.5 164 10.6 165 10.9 166 11.6 167 11.0 168 11.3 169 10.7 170 11.3 171 10.7 172 11.2 173 10.7 174 10.4 175 10.8 176 11.2 177 10.9 178 11.2 179 10.7 180 10.4 181 10.6 182 11.4 183 11.4 184 10.1 185 10.6 186 11.1 187 11.2 188 10.8 189 11.0 190 11.7 191 11.6 192 12.3 193 12.5 194 12.3 195 11.7 196 11.1 197 11.7 198 11.1 199 11.8 200 12.0 201 11.4 202 11.4 203 11.4 204 12.2 205 12.0 206 12.5 207 10.7 208 11.8 209 11.3 210 10.7 211 10.5 212 9.2 213 10.5 214 11.1 215 11.6 216 12.2 217 11.7 218 11.1 219 11.6 220 12.1 221 12.1 222 12.3 223 12.0 224 12.3 225 12.5 226 12.6 227 12.4 228 11.3 229 11.2 230 11.8 231 11.9 232 12.0 233 11.0 234 11.6 235 11.5 236 10.8 237 10.7 238 10.6 239 10.5 240 11.6 241 11.3 242 11.5 243 11.6 244 10.8 245 10.6 246 10.6 247 10.1 248 10.2 249 10.9 250 10.7 251 10.8 252 10.3 253 10.2 254 9.8 255 11.6 256 11.2 257 10.6 258 10.3 259 10.0 260 11.1 261 11.4 262 11.7 263 10.9 264 10.0 265 10.8 266 10.5 267 10.3 268 9.3 269 11.4 270 11.7 271 11.8 272 11.1 273 11.6 274 11.0 275 10.5 276 9.9 277 9.9 278 9.9 279 10.2 280 10.2 281 11.0 282 11.0 283 11.5 284 11.4 285 11.4 286 11.4 287 10.7 288 11.3 289 11.0 290 10.5 291 11.3 292 11.2 293 11.0 294 10.4 295 10.1 296 10.3 297 11.1 298 10.8 299 10.3 300 10.3 301 10.1 302 10.5 303 11.0 304 10.7 305 10.6 306 10.0 307 11.1 308 10.9 309 11.4 310 10.8 311 10.7 312 11.4 313 10.9 314 11.7 315 11.3 316 10.3 317 11.2 318 11.6 319 10.9 320 10.4 321 10.9 322 11.3 323 11.5 324 11.3 325 11.6 326 11.9 327 11.2 328 10.7 329 11.1 330 10.4 331 10.8 332 10.4 333 9.9 334 10.3 335 10.8 336 10.8 337 10.5 338 11.0 339 10.3 340 10.8 341 10.5 342 11.3 343 10.4 344 10.5 345 10.2 346 10.9 347 10.4 348 10.4 349 10.2 350 10.9 351 11.5 352 10.8 353 10.7 354 11.4 355 11.0 356 11.6 357 10.6 358 10.5 359 11.2 360 11.8 361 11.0 362 11.6 363 10.5 364 10.4 365 10.3 366 9.8 367 10.0 368 9.7 369 9.7 370 10.7 371 10.6 372 10.6 373 11.3 374 10.8 375 10.1 376 10.8 377 9.2 378 11.0 379 11.2 380 10.8 381 11.4 382 10.8 383 10.5 384 9.9 385 10.9 386 10.4 387 11.2 388 11.7 389 10.9 390 10.9 391 10.4 392 11.0 393 11.3 394 10.9 395 10.7 396 10.2 397 10.9 398 8.8 399 10.4 400 11.2 401 10.8 402 10.3 403 11.0 404 10.7 405 11.1 406 11.5 407 11.6 408 11.9 409 11.7 410 11.9 411 11.2 412 10.8 413 11.1 414 11.1 415 11.2 416 11.8 417 12.4 418 11.9 419 12.2 420 11.2 421 10.8 422 11.8 423 12.4 424 12.6 425 11.8 426 12.4 427 12.2 428 11.5 429 11.0 430 11.0 431 11.5 432 10.9 433 11.5 434 11.3 435 11.9 436 11.2 437 11.3 438 11.7 439 11.2 440 11.3 441 11.2 442 11.2 443 11.2 444 12.0 445 11.7 446 12.1 447 11.2 448 11.3 449 11.4 450 11.5 451 10.9 452 11.5 453 11.0 454 11.1 455 10.9 456 11.3 457 10.9 458 11.7 459 11.2 460 12.1 461 11.9 462 12.4 463 12.7 464 12.7 465 12.6 466 12.0 467 12.3 468 11.6 469 11.6 470 11.0 471 11.6 472 10.9 473 11.6 474 12.1 475 12.0 476 11.9 477 11.6 478 11.5 479 11.4 480 10.7 481 11.0 482 11.6 483 11.5 484 11.4 485 10.9 486 10.5 487 11.0 488 11.4 489 11.8 490 11.6 491 11.6 492 12.2 493 12.4 494 12.3 495 11.5 496 11.5 497 12.1 498 12.2 499 11.2 500 11.7 501 12.2 502 12.4 503 12.0 504 11.3 505 11.4 506 10.8 507 10.6 508 11.3 509 10.9 510 10.6 511 11.3 512 12.0 513 11.9 514 11.2 515 11.6 516 12.0 517 12.6 518 12.0 519 11.7 520 12.1 521 12.4 522 12.3 523 12.1 524 10.8 525 11.2 526 11.3 527 12.1 528 11.5 529 9.7 530 10.7 531 10.7 532 11.3 533 11.7 534 11.2 535 11.0 536 10.7 537 11.7 538 11.6 539 10.9 540 11.4 L540 19.5 L539 20.1 L538 19.6 L537 20.1 L536 20.0 L535 19.8 L534 20.2 L533 20.3 L532 20.1 L531 19.2 L530 19.8 L529 20.0 L528 20.2 L527 19.9 L526 20.1 L525 19.8 L524 20.3 L523 20.3 L522 21.2 L521 21.1 L520 21.0 L519 20.6 L518 20.8 L517 20.1 L516 20.8 L515 21.1 L514 20.6 L513 20.9 L512 20.2 L511 19.9 L510 19.9 L509 20.5 L508 20.2 L507 20.4 L506 20.8 L505 20.7 L504 20.9 L503 21.2 L502 20.7 L501 21.7 L500 20.1 L499 20.6 L498 19.9 L497 19.8 L496 20.4 L495 20.2 L494 20.5 L493 20.8 L492 20.1 L491 20.3 L490 20.2 L489 20.5 L488 20.6 L487 21.1 L486 20.8 L485 21.4 L484 21.0 L483 23.1 L482 21.3 L481 21.1 L480 21.0 L479 20.8 L478 20.7 L477 20.2 L476 19.8 L475 19.8 L474 20.4 L473 19.4 L472 19.8 L471 19.6 L470 20.2 L469 19.4 L468 19.7 L467 19.9 L466 20.4 L465 20.5 L464 21.2 L463 19.8 L462 19.6 L461 20.0 L460 20.1 L459 20.2 L458 20.0 L457 19.8 L456 19.5 L455 19.1 L454 19.1 L453 18.9 L452 19.2 L451 19.7 L450 19.7 L449 19.7 L448 19.6 L447 19.2 L446 19.4 L445 19.5 L444 20.0 L443 19.3 L442 19.7 L441 22.1 L440 20.3 L439 20.2 L438 19.7 L437 18.8 L436 19.4 L435 19.5 L434 19.6 L433 19.3 L432 19.9 L431 19.1 L430 20.0 L429 19.7 L428 19.2 L427 19.3 L426 19.9 L425 19.5 L424 19.9 L423 19.5 L422 19.9 L421 19.5 L420 18.9 L419 19.3 L418 19.1 L417 19.0 L416 19.3 L415 19.1 L414 20.1 L413 19.6 L412 19.3 L411 19.0 L410 19.8 L409 20.4 L408 18.8 L407 19.2 L406 21.6 L405 19.6 L404 19.7 L403 18.8 L402 19.3 L401 19.3 L400 19.7 L399 19.0 L398 19.4 L397 20.9 L396 19.2 L395 19.7 L394 19.0 L393 19.2 L392 19.0 L391 19.7 L390 18.9 L389 18.7 L388 19.1 L387 19.0 L386 19.7 L385 19.5 L384 18.9 L383 19.1 L382 18.7 L381 19.1 L380 19.5 L379 18.7 L378 18.9 L377 19.1 L376 19.0 L375 18.4 L374 18.7 L373 18.5 L372 18.9 L371 19.0 L370 19.6 L369 20.3 L368 19.8 L367 18.9 L366 19.2 L365 19.6 L364 20.5 L363 20.3 L362 19.8 L361 19.1 L360 19.0 L359 19.0 L358 19.4 L357 19.6 L356 18.9 L355 18.4 L354 18.8 L353 19.3 L352 19.4 L351 19.9 L350 20.1 L349 19.6 L348 20.1 L347 19.8 L346 19.2 L345 18.1 L344 18.0 L343 18.2 L342 18.4 L341 18.6 L340 19.1 L339 19.5 L338 19.2 L337 19.7 L336 19.0 L335 19.8 L334 19.2 L333 18.7 L332 19.5 L331 18.7 L330 18.8 L329 19.7 L328 18.9 L327 19.5 L326 20.0 L325 19.6 L324 19.7 L323 18.9 L322 19.0 L321 19.9 L320 19.3 L319 18.3 L318 18.7 L317 19.1 L316 20.1 L315 19.6 L314 19.2 L313 19.3 L312 19.8 L311 20.2 L310 20.5 L309 19.7 L308 19.7 L307 19.1 L306 19.8 L305 18.8 L304 19.2 L303 19.1 L302 19.1 L301 19.4 L300 20.0 L299 20.4 L298 19.9 L297 19.9 L296 19.4 L295 20.1 L294 19.6 L293 20.0 L292 20.2 L291 20.3 L290 19.6 L289 20.1 L288 20.1 L287 20.6 L286 20.6 L285 20.2 L284 20.2 L283 19.5 L282 20.3 L281 19.7 L280 19.6 L279 20.6 L278 20.2 L277 20.0 L276 20.3 L275 20.6 L274 20.7 L273 19.9 L272 20.2 L271 19.7 L270 20.5 L269 20.7 L268 19.9 L267 20.0 L266 19.6 L265 19.5 L264 19.9 L263 19.8 L262 19.9 L261 19.6 L260 20.1 L259 20.5 L258 21.6 L257 21.2 L256 20.8 L255 20.2 L254 19.8 L253 20.6 L252 20.1 L251 19.4 L250 19.6 L249 19.9 L248 21.0 L247 20.8 L246 20.1 L245 20.5 L244 20.4 L243 20.3 L242 20.7 L241 19.9 L240 19.6 L239 20.5 L238 19.9 L237 19.0 L236 19.4 L235 20.0 L234 19.7 L233 20.0 L232 20.4 L231 20.7 L230 20.4 L229 20.3 L228 19.9 L227 20.7 L226 20.6 L225 20.6 L224 20.6 L223 20.6 L222 20.9 L221 20.5 L220 20.6 L219 21.0 L218 20.4 L217 20.6 L216 20.5 L215 20.2 L214 20.2 L213 20.7 L212 20.5 L211 19.7 L210 19.9 L209 19.9 L208 20.3 L207 20.4 L206 20.8 L205 20.6 L204 20.9 L203 20.7 L202 22.4 L201 20.1 L200 20.0 L199 20.3 L198 19.9 L197 20.8 L196 20.9 L195 20.3 L194 20.6 L193 20.4 L192 22.4 L191 19.8 L190 19.4 L189 19.6 L188 20.0 L187 20.6 L186 21.4 L185 21.2 L184 21.3 L183 21.5 L182 21.4 L181 21.2 L180 21.1 L179 20.7 L178 20.1 L177 20.6 L176 20.0 L175 20.5 L174 21.1 L173 21.3 L172 20.2 L171 20.9 L170 20.2 L169 21.1 L168 20.4 L167 20.0 L166 19.8 L165 19.8 L164 19.8 L163 20.5 L162 20.7 L161 21.2 L160 20.9 L159 20.5 L158 20.4 L157 20.5 L156 19.9 L155 19.9 L154 20.3 L153 20.3 L152 19.6 L151 19.9 L150 20.0 L149 20.5 L148 19.6 L147 19.8 L146 19.9 L145 21.2 L144 20.0 L143 21.1 L142 20.8 L141 20.7 L140 20.8 L139 20.2 L138 20.4 L137 20.4 L136 20.2 L135 20.2 L134 20.5 L133 20.3 L132 20.5 L131 19.9 L130 20.2 L129 20.2 L128 19.5 L127 19.5 L126 19.5 L125 20.0 L124 19.7 L123 19.9 L122 19.9 L121 20.1 L120 20.1 L119 20.0 L118 19.4 L117 20.0 L116 19.7 L115 19.9 L114 19.6 L113 19.5 L112 19.5 L111 19.5 L110 18.7 L109 19.3 L108 19.8 L107 19.7 L106 20.0 L105 19.7 L104 20.1 L103 19.4 L102 18.7 L101 18.8 L100 19.1 L99 19.2 L98 19.7 L97 19.1 L96 19.2 L95 19.6 L94 19.8 L93 19.8 L92 20.2 L91 20.0 L90 19.6 L89 20.0 L88 20.1 L87 19.8 L86 20.2 L85 19.7 L84 19.7 L83 21.5 L82 20.1 L81 19.5 L80 19.7 L79 19.4 L78 18.7 L77 19.0 L76 19.6 L75 19.0 L74 19.0 L73 19.1 L72 19.0 L71 19.3 L70 19.1 L69 19.8 L68 19.3 L67 20.3 L66 20.1 L65 19.5 L64 19.3 L63 19.4 L62 19.3 L61 20.3 L60 20.0 L59 19.1 L58 19.0 L57 20.2 L56 18.8 L55 19.0 L54 19.5 L53 20.0 L52 19.6 L51 20.6 L50 19.1 L49 19.8 L48 19.0 L47 19.7 L46 19.0 L45 19.0 L44 19.8 L43 19.5 L42 20.0 L41 19.8 L40 19.1 L39 20.1 L38 19.6 L37 19.5 L36 20.2 L35 20.3 L34 20.3 L33 20.2 L32 19.8 L31 19.7 L30 19.0 L29 19.3 L28 19.9 L27 19.3 L26 21.2 L25 19.8 L24 19.1 L23 19.7 L22 19.4 L21 19.4 L20 19.1 L19 18.6 L18 18.6 L17 18.9 L16 19.4 L15 19.1 L14 18.4 L13 19.1 L12 18.4 L11 19.0 L10 19.4 L9 18.9 L8 18.7 L7 19.1 L6 18.0 L5 18.3 L4 18.7 L3 18.5 L2 19.2 L1 19.9 L0 19.4z" fill="#4f86aa"/><path d="M0 10.7 1 11.0 2 11.0 3 10.3 4 9.9 5 9.8 6 10.2 7 10.0 8 10.6 9 10.9 10 11.7 11 11.9 12 11.0 13 10.7 14 10.3 15 10.8 16 11.0 17 10.3 18 10.9 19 10.7 20 10.7 21 11.3 22 10.8 23 10.9 24 11.3 25 11.9 26 11.3 27 10.6 28 10.1 29 10.9 30 11.5 31 11.5 32 11.4 33 11.7 34 11.3 35 10.4 36 10.9 37 11.3 38 11.0 39 10.2 40 10.0 41 9.7 42 9.7 43 10.0 44 9.8 45 10.3 46 11.0 47 10.6 48 10.5 49 11.3 50 10.6 51 10.3 52 10.7 53 10.0 54 10.2 55 11.1 56 11.0 57 11.2 58 11.6 59 11.8 60 11.2 61 10.5 62 10.0 63 9.9 64 10.1 65 9.7 66 9.7 67 9.5 68 10.3 69 10.2 70 10.4 71 11.2 72 11.0 73 10.4 74 10.5 75 11.2 76 10.4 77 10.8 78 9.6 79 11.8 80 11.8 81 11.3 82 11.7 83 11.9 84 11.2 85 12.0 86 12.1 87 12.1 88 11.8 89 9.8 90 10.8 91 11.7 92 12.3 93 12.6 94 11.7 95 11.1 96 11.5 97 12.0 98 12.1 99 11.2 100 12.0 101 12.2 102 11.5 103 11.3 104 12.2 105 11.8 106 12.1 107 11.4 108 12.2 109 11.4 110 12.3 111 11.9 112 9.3 113 11.7 114 12.4 115 12.7 116 11.9 117 11.5 118 11.8 119 11.7 120 12.4 121 12.1 122 12.6 123 12.9 124 12.5 125 11.5 126 9.4 127 11.0 128 11.7 129 11.5 130 11.7 131 11.2 132 11.1 133 11.8 134 11.9 135 12.4 136 12.3 137 12.1 138 11.8 139 11.8 140 12.0 141 12.5 142 12.2 143 12.5 144 11.6 145 11.0 146 10.6 147 11.5 148 11.0 149 11.5 150 12.1 151 11.5 152 11.4 153 12.2 154 11.4 155 11.5 156 11.0 157 10.1 158 10.3 159 11.7 160 10.9 161 11.6 162 10.9 163 10.5 164 10.6 165 10.9 166 11.6 167 11.0 168 11.3 169 10.7 170 11.3 171 10.7 172 11.2 173 10.7 174 10.4 175 10.8 176 11.2 177 10.9 178 11.2 179 10.7 180 10.4 181 10.6 182 11.4 183 11.4 184 10.1 185 10.6 186 11.1 187 11.2 188 10.8 189 11.0 190 11.7 191 11.6 192 12.3 193 12.5 194 12.3 195 11.7 196 11.1 197 11.7 198 11.1 199 11.8 200 12.0 201 11.4 202 11.4 203 11.4 204 12.2 205 12.0 206 12.5 207 10.7 208 11.8 209 11.3 210 10.7 211 10.5 212 9.2 213 10.5 214 11.1 215 11.6 216 12.2 217 11.7 218 11.1 219 11.6 220 12.1 221 12.1 222 12.3 223 12.0 224 12.3 225 12.5 226 12.6 227 12.4 228 11.3 229 11.2 230 11.8 231 11.9 232 12.0 233 11.0 234 11.6 235 11.5 236 10.8 237 10.7 238 10.6 239 10.5 240 11.6 241 11.3 242 11.5 243 11.6 244 10.8 245 10.6 246 10.6 247 10.1 248 10.2 249 10.9 250 10.7 251 10.8 252 10.3 253 10.2 254 9.8 255 11.6 256 11.2 257 10.6 258 10.3 259 10.0 260 11.1 261 11.4 262 11.7 263 10.9 264 10.0 265 10.8 266 10.5 267 10.3 268 9.3 269 11.4 270 11.7 271 11.8 272 11.1 273 11.6 274 11.0 275 10.5 276 9.9 277 9.9 278 9.9 279 10.2 280 10.2 281 11.0 282 11.0 283 11.5 284 11.4 285 11.4 286 11.4 287 10.7 288 11.3 289 11.0 290 10.5 291 11.3 292 11.2 293 11.0 294 10.4 295 10.1 296 10.3 297 11.1 298 10.8 299 10.3 300 10.3 301 10.1 302 10.5 303 11.0 304 10.7 305 10.6 306 10.0 307 11.1 308 10.9 309 11.4 310 10.8 311 10.7 312 11.4 313 10.9 314 11.7 315 11.3 316 10.3 317 11.2 318 11.6 319 10.9 320 10.4 321 10.9 322 11.3 323 11.5 324 11.3 325 11.6 326 11.9 327 11.2 328 10.7 329 11.1 330 10.4 331 10.8 332 10.4 333 9.9 334 10.3 335 10.8 336 10.8 337 10.5 338 11.0 339 10.3 340 10.8 341 10.5 342 11.3 343 10.4 344 10.5 345 10.2 346 10.9 347 10.4 348 10.4 349 10.2 350 10.9 351 11.5 352 10.8 353 10.7 354 11.4 355 11.0 356 11.6 357 10.6 358 10.5 359 11.2 360 11.8 361 11.0 362 11.6 363 10.5 364 10.4 365 10.3 366 9.8 367 10.0 368 9.7 369 9.7 370 10.7 371 10.6 372 10.6 373 11.3 374 10.8 375 10.1 376 10.8 377 9.2 378 11.0 379 11.2 380 10.8 381 11.4 382 10.8 383 10.5 384 9.9 385 10.9 386 10.4 387 11.2 388 11.7 389 10.9 390 10.9 391 10.4 392 11.0 393 11.3 394 10.9 395 10.7 396 10.2 397 10.9 398 8.8 399 10.4 400 11.2 401 10.8 402 10.3 403 11.0 404 10.7 405 11.1 406 11.5 407 11.6 408 11.9 409 11.7 410 11.9 411 11.2 412 10.8 413 11.1 414 11.1 415 11.2 416 11.8 417 12.4 418 11.9 419 12.2 420 11.2 421 10.8 422 11.8 423 12.4 424 12.6 425 11.8 426 12.4 427 12.2 428 11.5 429 11.0 430 11.0 431 11.5 432 10.9 433 11.5 434 11.3 435 11.9 436 11.2 437 11.3 438 11.7 439 11.2 440 11.3 441 11.2 442 11.2 443 11.2 444 12.0 445 11.7 446 12.1 447 11.2 448 11.3 449 11.4 450 11.5 451 10.9 452 11.5 453 11.0 454 11.1 455 10.9 456 11.3 457 10.9 458 11.7 459 11.2 460 12.1 461 11.9 462 12.4 463 12.7 464 12.7 465 12.6 466 12.0 467 12.3 468 11.6 469 11.6 470 11.0 471 11.6 472 10.9 473 11.6 474 12.1 475 12.0 476 11.9 477 11.6 478 11.5 479 11.4 480 10.7 481 11.0 482 11.6 483 11.5 484 11.4 485 10.9 486 10.5 487 11.0 488 11.4 489 11.8 490 11.6 491 11.6 492 12.2 493 12.4 494 12.3 495 11.5 496 11.5 497 12.1 498 12.2 499 11.2 500 11.7 501 12.2 502 12.4 503 12.0 504 11.3 505 11.4 506 10.8 507 10.6 508 11.3 509 10.9 510 10.6 511 11.3 512 12.0 513 11.9 514 11.2 515 11.6 516 12.0 517 12.6 518 12.0 519 11.7 520 12.1 521 12.4 522 12.3 523 12.1 524 10.8 525 11.2 526 11.3 527 12.1 528 11.5 529 9.7 530 10.7 531 10.7 532 11.3 533 11.7 534 11.2 535 11.0 536 10.7 537 11.7 538 11.6 539 10.9 540 11.4" fill="none" stroke="#26363f" stroke-width="1"/><path d="M0 19.4 1 19.9 2 19.2 3 18.5 4 18.7 5 18.3 6 18.0 7 19.1 8 18.7 9 18.9 10 19.4 11 19.0 12 18.4 13 19.1 14 18.4 15 19.1 16 19.4 17 18.9 18 18.6 19 18.6 20 19.1 21 19.4 22 19.4 23 19.7 24 19.1 25 19.8 26 21.2 27 19.3 28 19.9 29 19.3 30 19.0 31 19.7 32 19.8 33 20.2 34 20.3 35 20.3 36 20.2 37 19.5 38 19.6 39 20.1 40 19.1 41 19.8 42 20.0 43 19.5 44 19.8 45 19.0 46 19.0 47 19.7 48 19.0 49 19.8 50 19.1 51 20.6 52 19.6 53 20.0 54 19.5 55 19.0 56 18.8 57 20.2 58 19.0 59 19.1 60 20.0 61 20.3 62 19.3 63 19.4 64 19.3 65 19.5 66 20.1 67 20.3 68 19.3 69 19.8 70 19.1 71 19.3 72 19.0 73 19.1 74 19.0 75 19.0 76 19.6 77 19.0 78 18.7 79 19.4 80 19.7 81 19.5 82 20.1 83 21.5 84 19.7 85 19.7 86 20.2 87 19.8 88 20.1 89 20.0 90 19.6 91 20.0 92 20.2 93 19.8 94 19.8 95 19.6 96 19.2 97 19.1 98 19.7 99 19.2 100 19.1 101 18.8 102 18.7 103 19.4 104 20.1 105 19.7 106 20.0 107 19.7 108 19.8 109 19.3 110 18.7 111 19.5 112 19.5 113 19.5 114 19.6 115 19.9 116 19.7 117 20.0 118 19.4 119 20.0 120 20.1 121 20.1 122 19.9 123 19.9 124 19.7 125 20.0 126 19.5 127 19.5 128 19.5 129 20.2 130 20.2 131 19.9 132 20.5 133 20.3 134 20.5 135 20.2 136 20.2 137 20.4 138 20.4 139 20.2 140 20.8 141 20.7 142 20.8 143 21.1 144 20.0 145 21.2 146 19.9 147 19.8 148 19.6 149 20.5 150 20.0 151 19.9 152 19.6 153 20.3 154 20.3 155 19.9 156 19.9 157 20.5 158 20.4 159 20.5 160 20.9 161 21.2 162 20.7 163 20.5 164 19.8 165 19.8 166 19.8 167 20.0 168 20.4 169 21.1 170 20.2 171 20.9 172 20.2 173 21.3 174 21.1 175 20.5 176 20.0 177 20.6 178 20.1 179 20.7 180 21.1 181 21.2 182 21.4 183 21.5 184 21.3 185 21.2 186 21.4 187 20.6 188 20.0 189 19.6 190 19.4 191 19.8 192 22.4 193 20.4 194 20.6 195 20.3 196 20.9 197 20.8 198 19.9 199 20.3 200 20.0 201 20.1 202 22.4 203 20.7 204 20.9 205 20.6 206 20.8 207 20.4 208 20.3 209 19.9 210 19.9 211 19.7 212 20.5 213 20.7 214 20.2 215 20.2 216 20.5 217 20.6 218 20.4 219 21.0 220 20.6 221 20.5 222 20.9 223 20.6 224 20.6 225 20.6 226 20.6 227 20.7 228 19.9 229 20.3 230 20.4 231 20.7 232 20.4 233 20.0 234 19.7 235 20.0 236 19.4 237 19.0 238 19.9 239 20.5 240 19.6 241 19.9 242 20.7 243 20.3 244 20.4 245 20.5 246 20.1 247 20.8 248 21.0 249 19.9 250 19.6 251 19.4 252 20.1 253 20.6 254 19.8 255 20.2 256 20.8 257 21.2 258 21.6 259 20.5 260 20.1 261 19.6 262 19.9 263 19.8 264 19.9 265 19.5 266 19.6 267 20.0 268 19.9 269 20.7 270 20.5 271 19.7 272 20.2 273 19.9 274 20.7 275 20.6 276 20.3 277 20.0 278 20.2 279 20.6 280 19.6 281 19.7 282 20.3 283 19.5 284 20.2 285 20.2 286 20.6 287 20.6 288 20.1 289 20.1 290 19.6 291 20.3 292 20.2 293 20.0 294 19.6 295 20.1 296 19.4 297 19.9 298 19.9 299 20.4 300 20.0 301 19.4 302 19.1 303 19.1 304 19.2 305 18.8 306 19.8 307 19.1 308 19.7 309 19.7 310 20.5 311 20.2 312 19.8 313 19.3 314 19.2 315 19.6 316 20.1 317 19.1 318 18.7 319 18.3 320 19.3 321 19.9 322 19.0 323 18.9 324 19.7 325 19.6 326 20.0 327 19.5 328 18.9 329 19.7 330 18.8 331 18.7 332 19.5 333 18.7 334 19.2 335 19.8 336 19.0 337 19.7 338 19.2 339 19.5 340 19.1 341 18.6 342 18.4 343 18.2 344 18.0 345 18.1 346 19.2 347 19.8 348 20.1 349 19.6 350 20.1 351 19.9 352 19.4 353 19.3 354 18.8 355 18.4 356 18.9 357 19.6 358 19.4 359 19.0 360 19.0 361 19.1 362 19.8 363 20.3 364 20.5 365 19.6 366 19.2 367 18.9 368 19.8 369 20.3 370 19.6 371 19.0 372 18.9 373 18.5 374 18.7 375 18.4 376 19.0 377 19.1 378 18.9 379 18.7 380 19.5 381 19.1 382 18.7 383 19.1 384 18.9 385 19.5 386 19.7 387 19.0 388 19.1 389 18.7 390 18.9 391 19.7 392 19.0 393 19.2 394 19.0 395 19.7 396 19.2 397 20.9 398 19.4 399 19.0 400 19.7 401 19.3 402 19.3 403 18.8 404 19.7 405 19.6 406 21.6 407 19.2 408 18.8 409 20.4 410 19.8 411 19.0 412 19.3 413 19.6 414 20.1 415 19.1 416 19.3 417 19.0 418 19.1 419 19.3 420 18.9 421 19.5 422 19.9 423 19.5 424 19.9 425 19.5 426 19.9 427 19.3 428 19.2 429 19.7 430 20.0 431 19.1 432 19.9 433 19.3 434 19.6 435 19.5 436 19.4 437 18.8 438 19.7 439 20.2 440 20.3 441 22.1 442 19.7 443 19.3 444 20.0 445 19.5 446 19.4 447 19.2 448 19.6 449 19.7 450 19.7 451 19.7 452 19.2 453 18.9 454 19.1 455 19.1 456 19.5 457 19.8 458 20.0 459 20.2 460 20.1 461 20.0 462 19.6 463 19.8 464 21.2 465 20.5 466 20.4 467 19.9 468 19.7 469 19.4 470 20.2 471 19.6 472 19.8 473 19.4 474 20.4 475 19.8 476 19.8 477 20.2 478 20.7 479 20.8 480 21.0 481 21.1 482 21.3 483 23.1 484 21.0 485 21.4 486 20.8 487 21.1 488 20.6 489 20.5 490 20.2 491 20.3 492 20.1 493 20.8 494 20.5 495 20.2 496 20.4 497 19.8 498 19.9 499 20.6 500 20.1 501 21.7 502 20.7 503 21.2 504 20.9 505 20.7 506 20.8 507 20.4 508 20.2 509 20.5 510 19.9 511 19.9 512 20.2 513 20.9 514 20.6 515 21.1 516 20.8 517 20.1 518 20.8 519 20.6 520 21.0 521 21.1 522 21.2 523 20.3 524 20.3 525 19.8 526 20.1 527 19.9 528 20.2 529 20.0 530 19.8 531 19.2 532 20.1 533 20.3 534 20.2 535 19.8 536 20.0 537 20.1 538 19.6 539 20.1 540 19.5" fill="none" stroke="#0e1a24" stroke-width="1.100"/><path d="M0 40.1 1 40.3 2 37.8 3 39.6 4 39.6 5 39.5 6 40.4 7 40.0 8 39.9 9 40.6 10 41.1 11 40.8 12 39.8 13 40.5 14 40.9 15 40.2 16 40.9 17 41.2 18 40.5 19 39.9 20 40.5 21 40.7 22 39.9 23 39.5 24 39.4 25 39.1 26 39.3 27 38.9 28 39.8 29 39.5 30 39.3 31 38.9 32 39.0 33 39.7 34 39.4 35 39.0 36 39.8 37 39.3 38 39.8 39 40.4 40 40.7 41 39.8 42 39.2 43 39.0 44 39.4 45 39.1 46 38.8 47 38.6 48 39.0 49 39.6 50 39.8 51 39.3 52 38.7 53 39.6 54 39.7 55 39.6 56 39.5 57 38.8 58 38.6 59 39.2 60 39.1 61 39.6 62 40.0 63 37.7 64 39.5 65 39.3 66 39.6 67 39.9 68 39.8 69 39.0 70 39.4 71 38.7 72 38.4 73 38.5 74 38.1 75 38.8 76 39.5 77 39.7 78 39.4 79 37.3 80 39.6 81 38.7 82 39.1 83 38.8 84 39.4 85 40.0 86 39.0 87 39.0 88 39.6 89 38.8 90 38.9 91 39.4 92 39.8 93 39.5 94 39.7 95 39.6 96 38.9 97 38.4 98 39.3 99 39.4 100 39.6 101 39.1 102 39.0 103 38.7 104 38.4 105 39.1 106 38.8 107 39.0 108 38.9 109 39.7 110 39.6 111 40.0 112 40.1 113 40.0 114 39.6 115 40.0 116 39.4 117 38.9 118 38.7 119 39.3 120 38.7 121 38.9 122 38.6 123 38.1 124 39.0 125 39.4 126 39.4 127 39.3 128 38.8 129 38.2 130 38.8 131 39.6 132 39.0 133 36.8 134 39.3 135 38.7 136 39.4 137 38.7 138 39.3 139 38.9 140 39.4 141 39.0 142 38.8 143 38.4 144 38.7 145 39.3 146 39.7 147 39.3 148 38.6 149 38.8 150 39.1 151 38.9 152 38.2 153 38.4 154 37.1 155 39.3 156 38.9 157 39.1 158 38.8 159 38.7 160 39.2 161 38.4 162 38.5 163 38.3 164 37.9 165 38.2 166 39.0 167 39.6 168 39.3 169 38.4 170 38.7 171 38.8 172 38.7 173 38.4 174 38.1 175 39.2 176 38.3 177 38.3 178 38.4 179 38.6 180 38.1 181 39.0 182 38.3 183 38.2 184 38.5 185 38.6 186 38.3 187 38.0 188 38.5 189 38.5 190 38.6 191 38.8 192 39.3 193 39.9 194 38.9 195 38.8 196 39.6 197 39.8 198 39.9 199 39.1 200 38.4 201 38.3 202 39.0 203 39.7 204 40.0 205 40.3 206 39.3 207 39.0 208 39.4 209 38.8 210 39.4 211 39.7 212 39.7 213 39.6 214 38.9 215 39.4 216 38.9 217 39.7 218 38.0 219 39.6 220 39.6 221 39.8 222 39.1 223 39.3 224 39.9 225 39.0 226 38.7 227 39.6 228 38.9 229 39.6 230 39.4 231 39.0 232 39.0 233 39.4 234 39.2 235 39.9 236 39.1 237 39.1 238 39.4 239 37.7 240 37.7 241 40.0 242 39.3 243 39.0 244 39.2 245 39.5 246 40.2 247 39.1 248 39.7 249 40.0 250 40.0 251 39.4 252 40.0 253 40.0 254 40.2 255 39.8 256 39.4 257 39.3 258 39.1 259 40.0 260 39.5 261 39.1 262 36.8 263 38.9 264 39.3 265 38.8 266 38.8 267 39.4 268 40.1 269 40.4 270 39.3 271 39.5 272 39.2 273 39.2 274 38.7 275 39.6 276 38.2 277 39.0 278 38.8 279 38.6 280 39.6 281 39.1 282 40.0 283 39.1 284 39.9 285 39.2 286 39.4 287 39.7 288 39.2 289 39.8 290 39.6 291 39.4 292 39.4 293 39.7 294 39.7 295 39.3 296 38.8 297 39.3 298 38.9 299 39.6 300 39.1 301 38.9 302 38.7 303 39.1 304 39.6 305 40.0 306 39.7 307 39.4 308 40.1 309 39.7 310 40.6 311 40.0 312 40.7 313 39.6 314 40.1 315 39.9 316 39.5 317 38.2 318 38.9 319 39.5 320 40.5 321 39.8 322 40.3 323 38.0 324 39.5 325 39.8 326 39.7 327 39.9 328 40.6 329 40.7 330 40.7 331 41.0 332 40.7 333 41.1 334 40.8 335 40.1 336 40.0 337 39.6 338 40.1 339 40.8 340 40.6 341 40.9 342 40.2 343 40.6 344 40.1 345 40.6 346 40.6 347 40.3 348 40.7 349 40.9 350 40.9 351 40.0 352 40.7 353 39.6 354 38.5 355 39.6 356 39.1 357 39.7 358 39.5 359 39.9 360 39.5 361 40.6 362 39.5 363 39.2 364 36.8 365 38.9 366 38.7 367 38.5 368 38.5 369 38.5 370 38.9 371 39.0 372 39.9 373 39.3 374 39.9 375 39.4 376 39.1 377 38.5 378 38.8 379 37.2 380 39.3 381 39.4 382 40.1 383 40.1 384 39.5 385 40.2 386 39.6 387 39.0 388 38.4 389 39.5 390 39.6 391 39.1 392 38.6 393 39.4 394 38.7 395 38.7 396 39.1 397 38.2 398 40.2 399 39.9 400 39.3 401 39.7 402 39.9 403 39.7 404 39.8 405 39.8 406 39.2 407 38.9 408 39.1 409 39.3 410 38.9 411 39.8 412 39.6 413 40.0 414 39.3 415 39.3 416 39.8 417 40.2 418 39.7 419 40.0 420 39.3 421 38.7 422 39.5 423 39.4 424 39.3 425 39.6 426 39.5 427 39.9 428 40.0 429 39.8 430 39.4 431 38.2 432 39.4 433 38.9 434 38.8 435 38.7 436 38.4 437 39.4 438 39.3 439 39.5 440 38.7 441 38.8 442 38.7 443 39.2 444 39.0 445 39.3 446 38.8 447 39.3 448 39.5 449 38.8 450 38.8 451 39.0 452 37.9 453 39.3 454 39.7 455 39.4 456 39.2 457 39.2 458 39.4 459 39.1 460 39.3 461 39.6 462 38.7 463 38.2 464 37.9 465 38.8 466 38.2 467 38.8 468 38.2 469 38.3 470 39.3 471 39.6 472 39.0 473 38.2 474 38.1 475 38.1 476 38.9 477 38.9 478 38.1 479 38.9 480 39.4 481 38.6 482 38.7 483 38.6 484 38.8 485 39.2 486 39.6 487 38.5 488 38.6 489 38.7 490 38.4 491 38.2 492 38.8 493 38.7 494 38.6 495 38.0 496 38.5 497 39.1 498 39.1 499 39.5 500 39.6 501 39.5 502 38.8 503 39.3 504 39.7 505 38.7 506 39.1 507 38.9 508 38.5 509 38.9 510 38.2 511 37.8 512 38.0 513 38.5 514 38.8 515 39.5 516 39.8 517 39.9 518 38.0 519 39.4 520 39.3 521 39.1 522 39.0 523 38.5 524 38.2 525 39.4 526 39.3 527 39.0 528 39.1 529 38.5 530 39.4 531 39.4 532 38.8 533 39.6 534 39.0 535 38.4 536 39.5 537 40.1 538 39.1 539 39.1 540 39.6 L540 48.0 L539 48.6 L538 48.3 L537 48.1 L536 47.5 L535 48.0 L534 47.6 L533 48.1 L532 48.0 L531 47.6 L530 49.7 L529 47.4 L528 47.2 L527 47.2 L526 47.6 L525 48.0 L524 47.8 L523 48.7 L522 48.4 L521 48.2 L520 48.1 L519 47.4 L518 47.6 L517 47.5 L516 47.9 L515 47.7 L514 48.1 L513 48.4 L512 47.9 L511 47.2 L510 47.4 L509 47.8 L508 48.1 L507 48.3 L506 48.2 L505 49.2 L504 49.7 L503 48.0 L502 49.4 L501 48.9 L500 48.6 L499 49.7 L498 49.0 L497 48.6 L496 48.5 L495 49.2 L494 49.3 L493 48.9 L492 49.0 L491 48.7 L490 47.8 L489 49.9 L488 48.2 L487 48.2 L486 48.5 L485 47.4 L484 47.7 L483 47.4 L482 47.9 L481 48.2 L480 49.0 L479 49.1 L478 49.1 L477 48.6 L476 49.0 L475 48.5 L474 49.2 L473 48.8 L472 48.8 L471 50.2 L470 48.4 L469 48.6 L468 48.3 L467 47.8 L466 47.8 L465 48.1 L464 48.7 L463 48.1 L462 48.8 L461 48.2 L460 48.0 L459 48.5 L458 48.7 L457 48.3 L456 48.4 L455 47.6 L454 48.7 L453 48.1 L452 49.2 L451 48.9 L450 48.3 L449 48.0 L448 48.2 L447 47.9 L446 48.4 L445 47.6 L444 47.1 L443 47.2 L442 47.4 L441 47.7 L440 47.2 L439 47.0 L438 47.3 L437 47.4 L436 47.9 L435 48.1 L434 48.4 L433 49.2 L432 48.7 L431 48.3 L430 48.0 L429 47.9 L428 47.5 L427 47.5 L426 48.1 L425 48.2 L424 47.9 L423 48.3 L422 48.4 L421 49.1 L420 48.6 L419 49.4 L418 49.2 L417 48.9 L416 48.1 L415 48.6 L414 48.3 L413 48.7 L412 49.6 L411 47.8 L410 48.3 L409 48.1 L408 48.6 L407 48.1 L406 48.0 L405 48.4 L404 48.1 L403 48.2 L402 48.4 L401 48.8 L400 48.7 L399 49.5 L398 48.8 L397 48.5 L396 48.8 L395 48.5 L394 48.2 L393 48.6 L392 48.3 L391 48.5 L390 49.1 L389 48.5 L388 50.4 L387 49.7 L386 49.7 L385 49.1 L384 48.8 L383 48.8 L382 49.2 L381 48.6 L380 48.6 L379 48.8 L378 48.4 L377 48.3 L376 48.5 L375 48.3 L374 48.5 L373 49.1 L372 49.7 L371 49.7 L370 48.9 L369 49.6 L368 49.6 L367 49.5 L366 49.8 L365 49.1 L364 48.2 L363 48.1 L362 48.5 L361 48.4 L360 48.8 L359 48.8 L358 48.7 L357 49.4 L356 49.1 L355 48.6 L354 48.2 L353 49.6 L352 48.9 L351 49.3 L350 49.2 L349 49.2 L348 48.1 L347 48.2 L346 48.8 L345 49.2 L344 48.9 L343 48.3 L342 48.7 L341 47.9 L340 48.4 L339 48.5 L338 49.1 L337 48.9 L336 49.1 L335 49.1 L334 49.3 L333 48.5 L332 48.5 L331 48.6 L330 49.5 L329 49.3 L328 48.9 L327 49.4 L326 49.9 L325 49.0 L324 49.8 L323 49.3 L322 49.0 L321 48.7 L320 48.7 L319 49.1 L318 49.7 L317 49.9 L316 49.6 L315 49.3 L314 48.7 L313 49.8 L312 49.7 L311 49.5 L310 49.0 L309 48.7 L308 48.6 L307 48.1 L306 48.4 L305 49.2 L304 48.2 L303 48.4 L302 48.5 L301 49.1 L300 48.2 L299 48.6 L298 48.1 L297 48.3 L296 48.5 L295 49.1 L294 48.3 L293 50.5 L292 48.9 L291 48.7 L290 49.4 L289 49.4 L288 49.6 L287 51.8 L286 49.6 L285 49.3 L284 49.4 L283 48.9 L282 48.1 L281 48.4 L280 49.0 L279 49.5 L278 49.5 L277 49.4 L276 48.6 L275 49.3 L274 48.8 L273 49.6 L272 49.5 L271 49.1 L270 49.5 L269 48.7 L268 49.5 L267 49.0 L266 49.1 L265 48.8 L264 48.2 L263 48.0 L262 48.3 L261 49.0 L260 48.7 L259 48.3 L258 48.7 L257 48.5 L256 48.5 L255 49.0 L254 49.0 L253 48.2 L252 48.3 L251 48.0 L250 48.6 L249 47.9 L248 48.6 L247 49.5 L246 49.2 L245 49.1 L244 49.0 L243 48.2 L242 47.4 L241 47.9 L240 48.2 L239 47.9 L238 48.4 L237 48.6 L236 47.8 L235 47.5 L234 47.7 L233 48.4 L232 47.7 L231 47.7 L230 48.5 L229 47.4 L228 47.7 L227 48.0 L226 47.3 L225 47.9 L224 48.9 L223 49.0 L222 48.5 L221 47.7 L220 47.3 L219 47.5 L218 47.8 L217 47.5 L216 47.9 L215 48.1 L214 48.5 L213 48.3 L212 48.7 L211 49.2 L210 49.0 L209 48.5 L208 47.7 L207 48.1 L206 48.1 L205 47.9 L204 47.4 L203 47.1 L202 47.5 L201 48.1 L200 47.4 L199 47.5 L198 47.7 L197 47.8 L196 47.1 L195 47.2 L194 47.7 L193 47.1 L192 47.4 L191 49.2 L190 47.6 L189 48.2 L188 48.5 L187 47.6 L186 48.0 L185 48.6 L184 48.0 L183 48.9 L182 49.1 L181 49.3 L180 49.2 L179 49.1 L178 48.7 L177 49.0 L176 49.2 L175 49.0 L174 48.7 L173 48.7 L172 48.8 L171 48.3 L170 48.5 L169 49.1 L168 48.6 L167 48.8 L166 48.2 L165 48.4 L164 48.8 L163 48.5 L162 49.0 L161 49.0 L160 48.4 L159 48.9 L158 48.6 L157 48.3 L156 48.2 L155 48.7 L154 47.9 L153 47.4 L152 47.9 L151 48.2 L150 48.7 L149 48.0 L148 48.4 L147 48.1 L146 48.1 L145 48.9 L144 48.8 L143 48.4 L142 47.6 L141 47.7 L140 47.6 L139 47.8 L138 47.6 L137 48.0 L136 48.4 L135 47.4 L134 47.1 L133 47.4 L132 47.6 L131 48.1 L130 48.1 L129 48.5 L128 48.0 L127 48.8 L126 48.8 L125 48.3 L124 48.1 L123 47.7 L122 47.6 L121 47.8 L120 48.1 L119 47.6 L118 48.3 L117 48.3 L116 47.4 L115 47.8 L114 48.8 L113 48.8 L112 48.7 L111 49.1 L110 48.9 L109 48.4 L108 48.6 L107 48.4 L106 49.0 L105 49.2 L104 48.8 L103 48.9 L102 49.0 L101 48.5 L100 48.6 L99 48.7 L98 49.3 L97 49.4 L96 50.0 L95 49.5 L94 49.5 L93 49.1 L92 48.4 L91 48.5 L90 48.3 L89 48.7 L88 47.7 L87 47.8 L86 48.3 L85 48.9 L84 48.7 L83 48.2 L82 48.8 L81 48.5 L80 48.7 L79 49.1 L78 49.1 L77 48.5 L76 50.9 L75 49.3 L74 49.3 L73 48.8 L72 49.8 L71 49.6 L70 49.7 L69 49.5 L68 49.4 L67 48.6 L66 48.9 L65 49.6 L64 49.2 L63 48.6 L62 49.1 L61 49.1 L60 49.7 L59 49.4 L58 49.8 L57 49.7 L56 49.5 L55 48.7 L54 49.3 L53 49.0 L52 49.8 L51 49.8 L50 49.6 L49 49.7 L48 49.8 L47 49.4 L46 49.6 L45 49.3 L44 48.3 L43 48.3 L42 48.7 L41 49.2 L40 48.7 L39 49.5 L38 52.0 L37 49.8 L36 49.7 L35 49.5 L34 49.6 L33 48.9 L32 49.4 L31 49.2 L30 49.2 L29 49.2 L28 48.4 L27 47.9 L26 48.2 L25 48.4 L24 48.7 L23 48.4 L22 48.0 L21 48.5 L20 48.1 L19 48.1 L18 48.2 L17 48.5 L16 48.1 L15 48.4 L14 49.0 L13 49.2 L12 48.5 L11 49.1 L10 48.3 L9 48.3 L8 48.7 L7 48.2 L6 48.0 L5 48.3 L4 50.2 L3 48.8 L2 48.1 L1 48.5 L0 49.3z" fill="#1d5f8c"/><path d="M0 40.1 1 40.3 2 37.8 3 39.6 4 39.6 5 39.5 6 40.4 7 40.0 8 39.9 9 40.6 10 41.1 11 40.8 12 39.8 13 40.5 14 40.9 15 40.2 16 40.9 17 41.2 18 40.5 19 39.9 20 40.5 21 40.7 22 39.9 23 39.5 24 39.4 25 39.1 26 39.3 27 38.9 28 39.8 29 39.5 30 39.3 31 38.9 32 39.0 33 39.7 34 39.4 35 39.0 36 39.8 37 39.3 38 39.8 39 40.4 40 40.7 41 39.8 42 39.2 43 39.0 44 39.4 45 39.1 46 38.8 47 38.6 48 39.0 49 39.6 50 39.8 51 39.3 52 38.7 53 39.6 54 39.7 55 39.6 56 39.5 57 38.8 58 38.6 59 39.2 60 39.1 61 39.6 62 40.0 63 37.7 64 39.5 65 39.3 66 39.6 67 39.9 68 39.8 69 39.0 70 39.4 71 38.7 72 38.4 73 38.5 74 38.1 75 38.8 76 39.5 77 39.7 78 39.4 79 37.3 80 39.6 81 38.7 82 39.1 83 38.8 84 39.4 85 40.0 86 39.0 87 39.0 88 39.6 89 38.8 90 38.9 91 39.4 92 39.8 93 39.5 94 39.7 95 39.6 96 38.9 97 38.4 98 39.3 99 39.4 100 39.6 101 39.1 102 39.0 103 38.7 104 38.4 105 39.1 106 38.8 107 39.0 108 38.9 109 39.7 110 39.6 111 40.0 112 40.1 113 40.0 114 39.6 115 40.0 116 39.4 117 38.9 118 38.7 119 39.3 120 38.7 121 38.9 122 38.6 123 38.1 124 39.0 125 39.4 126 39.4 127 39.3 128 38.8 129 38.2 130 38.8 131 39.6 132 39.0 133 36.8 134 39.3 135 38.7 136 39.4 137 38.7 138 39.3 139 38.9 140 39.4 141 39.0 142 38.8 143 38.4 144 38.7 145 39.3 146 39.7 147 39.3 148 38.6 149 38.8 150 39.1 151 38.9 152 38.2 153 38.4 154 37.1 155 39.3 156 38.9 157 39.1 158 38.8 159 38.7 160 39.2 161 38.4 162 38.5 163 38.3 164 37.9 165 38.2 166 39.0 167 39.6 168 39.3 169 38.4 170 38.7 171 38.8 172 38.7 173 38.4 174 38.1 175 39.2 176 38.3 177 38.3 178 38.4 179 38.6 180 38.1 181 39.0 182 38.3 183 38.2 184 38.5 185 38.6 186 38.3 187 38.0 188 38.5 189 38.5 190 38.6 191 38.8 192 39.3 193 39.9 194 38.9 195 38.8 196 39.6 197 39.8 198 39.9 199 39.1 200 38.4 201 38.3 202 39.0 203 39.7 204 40.0 205 40.3 206 39.3 207 39.0 208 39.4 209 38.8 210 39.4 211 39.7 212 39.7 213 39.6 214 38.9 215 39.4 216 38.9 217 39.7 218 38.0 219 39.6 220 39.6 221 39.8 222 39.1 223 39.3 224 39.9 225 39.0 226 38.7 227 39.6 228 38.9 229 39.6 230 39.4 231 39.0 232 39.0 233 39.4 234 39.2 235 39.9 236 39.1 237 39.1 238 39.4 239 37.7 240 37.7 241 40.0 242 39.3 243 39.0 244 39.2 245 39.5 246 40.2 247 39.1 248 39.7 249 40.0 250 40.0 251 39.4 252 40.0 253 40.0 254 40.2 255 39.8 256 39.4 257 39.3 258 39.1 259 40.0 260 39.5 261 39.1 262 36.8 263 38.9 264 39.3 265 38.8 266 38.8 267 39.4 268 40.1 269 40.4 270 39.3 271 39.5 272 39.2 273 39.2 274 38.7 275 39.6 276 38.2 277 39.0 278 38.8 279 38.6 280 39.6 281 39.1 282 40.0 283 39.1 284 39.9 285 39.2 286 39.4 287 39.7 288 39.2 289 39.8 290 39.6 291 39.4 292 39.4 293 39.7 294 39.7 295 39.3 296 38.8 297 39.3 298 38.9 299 39.6 300 39.1 301 38.9 302 38.7 303 39.1 304 39.6 305 40.0 306 39.7 307 39.4 308 40.1 309 39.7 310 40.6 311 40.0 312 40.7 313 39.6 314 40.1 315 39.9 316 39.5 317 38.2 318 38.9 319 39.5 320 40.5 321 39.8 322 40.3 323 38.0 324 39.5 325 39.8 326 39.7 327 39.9 328 40.6 329 40.7 330 40.7 331 41.0 332 40.7 333 41.1 334 40.8 335 40.1 336 40.0 337 39.6 338 40.1 339 40.8 340 40.6 341 40.9 342 40.2 343 40.6 344 40.1 345 40.6 346 40.6 347 40.3 348 40.7 349 40.9 350 40.9 351 40.0 352 40.7 353 39.6 354 38.5 355 39.6 356 39.1 357 39.7 358 39.5 359 39.9 360 39.5 361 40.6 362 39.5 363 39.2 364 36.8 365 38.9 366 38.7 367 38.5 368 38.5 369 38.5 370 38.9 371 39.0 372 39.9 373 39.3 374 39.9 375 39.4 376 39.1 377 38.5 378 38.8 379 37.2 380 39.3 381 39.4 382 40.1 383 40.1 384 39.5 385 40.2 386 39.6 387 39.0 388 38.4 389 39.5 390 39.6 391 39.1 392 38.6 393 39.4 394 38.7 395 38.7 396 39.1 397 38.2 398 40.2 399 39.9 400 39.3 401 39.7 402 39.9 403 39.7 404 39.8 405 39.8 406 39.2 407 38.9 408 39.1 409 39.3 410 38.9 411 39.8 412 39.6 413 40.0 414 39.3 415 39.3 416 39.8 417 40.2 418 39.7 419 40.0 420 39.3 421 38.7 422 39.5 423 39.4 424 39.3 425 39.6 426 39.5 427 39.9 428 40.0 429 39.8 430 39.4 431 38.2 432 39.4 433 38.9 434 38.8 435 38.7 436 38.4 437 39.4 438 39.3 439 39.5 440 38.7 441 38.8 442 38.7 443 39.2 444 39.0 445 39.3 446 38.8 447 39.3 448 39.5 449 38.8 450 38.8 451 39.0 452 37.9 453 39.3 454 39.7 455 39.4 456 39.2 457 39.2 458 39.4 459 39.1 460 39.3 461 39.6 462 38.7 463 38.2 464 37.9 465 38.8 466 38.2 467 38.8 468 38.2 469 38.3 470 39.3 471 39.6 472 39.0 473 38.2 474 38.1 475 38.1 476 38.9 477 38.9 478 38.1 479 38.9 480 39.4 481 38.6 482 38.7 483 38.6 484 38.8 485 39.2 486 39.6 487 38.5 488 38.6 489 38.7 490 38.4 491 38.2 492 38.8 493 38.7 494 38.6 495 38.0 496 38.5 497 39.1 498 39.1 499 39.5 500 39.6 501 39.5 502 38.8 503 39.3 504 39.7 505 38.7 506 39.1 507 38.9 508 38.5 509 38.9 510 38.2 511 37.8 512 38.0 513 38.5 514 38.8 515 39.5 516 39.8 517 39.9 518 38.0 519 39.4 520 39.3 521 39.1 522 39.0 523 38.5 524 38.2 525 39.4 526 39.3 527 39.0 528 39.1 529 38.5 530 39.4 531 39.4 532 38.8 533 39.6 534 39.0 535 38.4 536 39.5 537 40.1 538 39.1 539 39.1 540 39.6" fill="none" stroke="#26363f" stroke-width="1"/><path d="M0 49.3 1 48.5 2 48.1 3 48.8 4 50.2 5 48.3 6 48.0 7 48.2 8 48.7 9 48.3 10 48.3 11 49.1 12 48.5 13 49.2 14 49.0 15 48.4 16 48.1 17 48.5 18 48.2 19 48.1 20 48.1 21 48.5 22 48.0 23 48.4 24 48.7 25 48.4 26 48.2 27 47.9 28 48.4 29 49.2 30 49.2 31 49.2 32 49.4 33 48.9 34 49.6 35 49.5 36 49.7 37 49.8 38 52.0 39 49.5 40 48.7 41 49.2 42 48.7 43 48.3 44 48.3 45 49.3 46 49.6 47 49.4 48 49.8 49 49.7 50 49.6 51 49.8 52 49.8 53 49.0 54 49.3 55 48.7 56 49.5 57 49.7 58 49.8 59 49.4 60 49.7 61 49.1 62 49.1 63 48.6 64 49.2 65 49.6 66 48.9 67 48.6 68 49.4 69 49.5 70 49.7 71 49.6 72 49.8 73 48.8 74 49.3 75 49.3 76 50.9 77 48.5 78 49.1 79 49.1 80 48.7 81 48.5 82 48.8 83 48.2 84 48.7 85 48.9 86 48.3 87 47.8 88 47.7 89 48.7 90 48.3 91 48.5 92 48.4 93 49.1 94 49.5 95 49.5 96 50.0 97 49.4 98 49.3 99 48.7 100 48.6 101 48.5 102 49.0 103 48.9 104 48.8 105 49.2 106 49.0 107 48.4 108 48.6 109 48.4 110 48.9 111 49.1 112 48.7 113 48.8 114 48.8 115 47.8 116 47.4 117 48.3 118 48.3 119 47.6 120 48.1 121 47.8 122 47.6 123 47.7 124 48.1 125 48.3 126 48.8 127 48.8 128 48.0 129 48.5 130 48.1 131 48.1 132 47.6 133 47.4 134 47.1 135 47.4 136 48.4 137 48.0 138 47.6 139 47.8 140 47.6 141 47.7 142 47.6 143 48.4 144 48.8 145 48.9 146 48.1 147 48.1 148 48.4 149 48.0 150 48.7 151 48.2 152 47.9 153 47.4 154 47.9 155 48.7 156 48.2 157 48.3 158 48.6 159 48.9 160 48.4 161 49.0 162 49.0 163 48.5 164 48.8 165 48.4 166 48.2 167 48.8 168 48.6 169 49.1 170 48.5 171 48.3 172 48.8 173 48.7 174 48.7 175 49.0 176 49.2 177 49.0 178 48.7 179 49.1 180 49.2 181 49.3 182 49.1 183 48.9 184 48.0 185 48.6 186 48.0 187 47.6 188 48.5 189 48.2 190 47.6 191 49.2 192 47.4 193 47.1 194 47.7 195 47.2 196 47.1 197 47.8 198 47.7 199 47.5 200 47.4 201 48.1 202 47.5 203 47.1 204 47.4 205 47.9 206 48.1 207 48.1 208 47.7 209 48.5 210 49.0 211 49.2 212 48.7 213 48.3 214 48.5 215 48.1 216 47.9 217 47.5 218 47.8 219 47.5 220 47.3 221 47.7 222 48.5 223 49.0 224 48.9 225 47.9 226 47.3 227 48.0 228 47.7 229 47.4 230 48.5 231 47.7 232 47.7 233 48.4 234 47.7 235 47.5 236 47.8 237 48.6 238 48.4 239 47.9 240 48.2 241 47.9 242 47.4 243 48.2 244 49.0 245 49.1 246 49.2 247 49.5 248 48.6 249 47.9 250 48.6 251 48.0 252 48.3 253 48.2 254 49.0 255 49.0 256 48.5 257 48.5 258 48.7 259 48.3 260 48.7 261 49.0 262 48.3 263 48.0 264 48.2 265 48.8 266 49.1 267 49.0 268 49.5 269 48.7 270 49.5 271 49.1 272 49.5 273 49.6 274 48.8 275 49.3 276 48.6 277 49.4 278 49.5 279 49.5 280 49.0 281 48.4 282 48.1 283 48.9 284 49.4 285 49.3 286 49.6 287 51.8 288 49.6 289 49.4 290 49.4 291 48.7 292 48.9 293 50.5 294 48.3 295 49.1 296 48.5 297 48.3 298 48.1 299 48.6 300 48.2 301 49.1 302 48.5 303 48.4 304 48.2 305 49.2 306 48.4 307 48.1 308 48.6 309 48.7 310 49.0 311 49.5 312 49.7 313 49.8 314 48.7 315 49.3 316 49.6 317 49.9 318 49.7 319 49.1 320 48.7 321 48.7 322 49.0 323 49.3 324 49.8 325 49.0 326 49.9 327 49.4 328 48.9 329 49.3 330 49.5 331 48.6 332 48.5 333 48.5 334 49.3 335 49.1 336 49.1 337 48.9 338 49.1 339 48.5 340 48.4 341 47.9 342 48.7 343 48.3 344 48.9 345 49.2 346 48.8 347 48.2 348 48.1 349 49.2 350 49.2 351 49.3 352 48.9 353 49.6 354 48.2 355 48.6 356 49.1 357 49.4 358 48.7 359 48.8 360 48.8 361 48.4 362 48.5 363 48.1 364 48.2 365 49.1 366 49.8 367 49.5 368 49.6 369 49.6 370 48.9 371 49.7 372 49.7 373 49.1 374 48.5 375 48.3 376 48.5 377 48.3 378 48.4 379 48.8 380 48.6 381 48.6 382 49.2 383 48.8 384 48.8 385 49.1 386 49.7 387 49.7 388 50.4 389 48.5 390 49.1 391 48.5 392 48.3 393 48.6 394 48.2 395 48.5 396 48.8 397 48.5 398 48.8 399 49.5 400 48.7 401 48.8 402 48.4 403 48.2 404 48.1 405 48.4 406 48.0 407 48.1 408 48.6 409 48.1 410 48.3 411 47.8 412 49.6 413 48.7 414 48.3 415 48.6 416 48.1 417 48.9 418 49.2 419 49.4 420 48.6 421 49.1 422 48.4 423 48.3 424 47.9 425 48.2 426 48.1 427 47.5 428 47.5 429 47.9 430 48.0 431 48.3 432 48.7 433 49.2 434 48.4 435 48.1 436 47.9 437 47.4 438 47.3 439 47.0 440 47.2 441 47.7 442 47.4 443 47.2 444 47.1 445 47.6 446 48.4 447 47.9 448 48.2 449 48.0 450 48.3 451 48.9 452 49.2 453 48.1 454 48.7 455 47.6 456 48.4 457 48.3 458 48.7 459 48.5 460 48.0 461 48.2 462 48.8 463 48.1 464 48.7 465 48.1 466 47.8 467 47.8 468 48.3 469 48.6 470 48.4 471 50.2 472 48.8 473 48.8 474 49.2 475 48.5 476 49.0 477 48.6 478 49.1 479 49.1 480 49.0 481 48.2 482 47.9 483 47.4 484 47.7 485 47.4 486 48.5 487 48.2 488 48.2 489 49.9 490 47.8 491 48.7 492 49.0 493 48.9 494 49.3 495 49.2 496 48.5 497 48.6 498 49.0 499 49.7 500 48.6 501 48.9 502 49.4 503 48.0 504 49.7 505 49.2 506 48.2 507 48.3 508 48.1 509 47.8 510 47.4 511 47.2 512 47.9 513 48.4 514 48.1 515 47.7 516 47.9 517 47.5 518 47.6 519 47.4 520 48.1 521 48.2 522 48.4 523 48.7 524 47.8 525 48.0 526 47.6 527 47.2 528 47.2 529 47.4 530 49.7 531 47.6 532 48.0 533 48.1 534 47.6 535 48.0 536 47.5 537 48.1 538 48.3 539 48.6 540 48.0" fill="none" stroke="#0e1a24" stroke-width="1.100"/></svg><div class="a" style="left:457px;top:248px;width:1px;height:58.500px;background:rgba(40,130,200,.2)"></div><div class="a" style="left:506px;top:248px;width:1px;height:58.500px;background:rgba(40,130,200,.2)"></div><div class="a" style="left:555px;top:248px;width:1px;height:58.500px;background:rgba(40,130,200,.2)"></div><div class="a" style="left:603px;top:248px;width:1px;height:58.500px;background:rgba(40,130,200,.2)"></div><div class="a" style="left:652px;top:248px;width:1px;height:58.500px;background:rgba(40,130,200,.2)"></div><div class="a" style="left:701px;top:248px;width:1px;height:58.500px;background:rgba(40,130,200,.2)"></div><div class="a" style="left:744px;top:248px;width:1px;height:58.500px;background:rgba(40,130,200,.2)"></div><div class="a" style="left:793px;top:248px;width:1px;height:58.500px;background:rgba(40,130,200,.2)"></div><div class="a" style="left:841px;top:248px;width:1px;height:58.500px;background:rgba(40,130,200,.2)"></div><div class="a" style="left:890px;top:248px;width:1px;height:58.500px;background:rgba(40,130,200,.2)"></div><div class="a" style="left:939px;top:248px;width:1px;height:58.500px;background:rgba(40,130,200,.2)"></div><div class="a" style="left:988px;top:248px;width:1px;height:58.500px;background:rgba(40,130,200,.2)"></div><div class="a" style="left:457px;top:558px;width:546px;height:58.700px;background:linear-gradient(#e97878,#e05252 30%,#d63a3a 65%,#cf3232);border:1px solid #a81c1c;border-top-color:#f0a0a0;border-left-color:#f0a0a0"></div><div class="a" style="left:506px;top:559px;width:1px;height:56px;background:rgba(210,30,30,.55)"></div><div class="a" style="left:555px;top:559px;width:1px;height:56px;background:rgba(210,30,30,.55)"></div><div class="a" style="left:603px;top:559px;width:1px;height:56px;background:rgba(210,30,30,.55)"></div><div class="a" style="left:652px;top:559px;width:1px;height:56px;background:rgba(210,30,30,.55)"></div><div class="a" style="left:701px;top:559px;width:1px;height:56px;background:rgba(210,30,30,.55)"></div><div class="a" style="left:744px;top:559px;width:1px;height:56px;background:rgba(210,30,30,.55)"></div><div class="a" style="left:793px;top:559px;width:1px;height:56px;background:rgba(210,30,30,.55)"></div><div class="a" style="left:841px;top:559px;width:1px;height:56px;background:rgba(210,30,30,.55)"></div><div class="a" style="left:890px;top:559px;width:1px;height:56px;background:rgba(210,30,30,.55)"></div><div class="a" style="left:939px;top:559px;width:1px;height:56px;background:rgba(210,30,30,.55)"></div><div class="a" style="left:988px;top:559px;width:1px;height:56px;background:rgba(210,30,30,.55)"></div><svg class="a" style="left:0;top:0;overflow:visible" width="1" height="1"><path d="M466 615V596.5Q468 585.5 475 583.5V615z M477.900 583.0h1V615h-1z M480.300 583.0h1.700V615h-1.700z M506 583.0h3.200V615h-3.200z M514.500 586.5h1V615h-1z M522.500 586.5h1V615h-1z" fill="#861618" opacity=".45"/><path d="M506.0 598.9H518.5V601.9H506.0zM518.5 604.9H530.6V607.9H518.5zM530.6 608.9H543.0V611.9H530.6zM543.0 605.9H555.6V608.9H543.0zM555.6 597.9H568.0V600.9H555.6zM568.0 601.9H580.0V604.9H568.0zM580.0 605.9H592.0V608.9H580.0zM592.0 604.4H598.0V607.4H592.0zM597.0 601.4H604.0V604.4H597.0zM604.0 594.9H629.0V597.9H604.0zM629.0 591.9H653.0V594.9H629.0zM653.0 594.9H665.0V597.9H653.0zM665.0 588.9H670.0V591.9H665.0zM670.0 585.4H674.0V588.4H670.0zM674.0 594.9H702.0V597.9H674.0zM702.0 591.9H708.0V594.9H702.0zM708.0 597.9H714.0V600.9H708.0zM714.0 600.9H720.0V603.9H714.0zM718.0 600.4H723.0V603.4H718.0zM721.0 602.4H725.5V605.4H721.0z" fill="#861618"/></svg><span class="pl" style="left:462px;top:562.5px;color:#fde8e8">V1</span><div class="a" style="left:457px;top:620px;width:546px;height:58.700px;background:linear-gradient(#ebcd78,#e2bc55 30%,#d6ac40 65%,#d0a638);border:1px solid #b88a18;border-top-color:#f4e0a0;border-left-color:#f4e0a0"></div><div class="a" style="left:506px;top:621px;width:1px;height:56px;background:rgba(215,150,30,.5)"></div><div class="a" style="left:555px;top:621px;width:1px;height:56px;background:rgba(215,150,30,.5)"></div><div class="a" style="left:603px;top:621px;width:1px;height:56px;background:rgba(215,150,30,.5)"></div><div class="a" style="left:652px;top:621px;width:1px;height:56px;background:rgba(215,150,30,.5)"></div><div class="a" style="left:701px;top:621px;width:1px;height:56px;background:rgba(215,150,30,.5)"></div><div class="a" style="left:744px;top:621px;width:1px;height:56px;background:rgba(215,150,30,.5)"></div><div class="a" style="left:793px;top:621px;width:1px;height:56px;background:rgba(215,150,30,.5)"></div><div class="a" style="left:841px;top:621px;width:1px;height:56px;background:rgba(215,150,30,.5)"></div><div class="a" style="left:890px;top:621px;width:1px;height:56px;background:rgba(215,150,30,.5)"></div><div class="a" style="left:939px;top:621px;width:1px;height:56px;background:rgba(215,150,30,.5)"></div><div class="a" style="left:988px;top:621px;width:1px;height:56px;background:rgba(215,150,30,.5)"></div><svg class="a" style="left:0;top:0;overflow:visible" width="1" height="1"><path d="M466 677V658.5Q468 647.5 475 645.5V677z M477.900 645.0h1V677h-1z M480.300 645.0h1.700V677h-1.700z M506 645.0h3.200V677h-3.200z M514.500 648.5h1V677h-1z M522.500 648.5h1V677h-1z" fill="#8a6e1e" opacity=".45"/><path d="M506.0 657.2H518.5V660.3H506.0zM518.5 654.6H530.6V657.6H518.5zM530.6 657.2H555.6V660.3H530.6zM555.6 660.9H562.0V663.9H555.6zM562.0 659.4H568.0V662.4H562.0zM568.0 657.2H573.6V660.3H568.0zM573.6 654.6H579.0V657.6H573.6zM579.0 657.2H611.0V660.3H579.0zM611.0 652.5H616.0V655.5H611.0zM616.0 649.9H622.6V652.9H616.0zM622.6 657.2H628.0V660.3H622.6zM627.7 654.6H640.0V657.6H627.7zM640.0 659.6H652.4V662.6H640.0zM652.4 652.1H671.6V655.2H652.4zM671.6 654.6H677.7V657.6H671.6zM677.7 657.2H702.0V660.3H677.7zM702.0 654.6H714.0V657.6H702.0zM714.0 649.9H720.0V652.9H714.0zM718.0 651.5H725.0V654.5H718.0zM744.5 657.2H769.0V660.3H744.5zM769.0 655.9H780.5V658.9H769.0zM780.5 657.2H787.0V660.3H780.5zM787.0 662.9H793.5V665.9H787.0zM793.5 655.9H818.0V658.9H793.5zM818.0 653.1H829.6V656.2H818.0zM829.6 662.9H835.7V665.9H829.6zM835.7 659.6H841.4V662.6H835.7zM841.4 657.2H866.8V660.3H841.4zM866.8 655.9H890.5V658.9H866.8zM890.5 653.1H915.0V656.2H890.5zM915.0 649.9H939.5V652.9H915.0zM939.5 653.1H963.0V656.2H939.5zM963.0 655.9H970.0V658.9H963.0zM970.0 653.1H976.7V656.2H970.0zM976.7 655.9H998.0V658.9H976.7z" fill="#8a6e1e"/></svg><span class="pl" style="left:462px;top:624.5px;color:#3a2c08">V2</span><div class="a" style="left:457px;top:682px;width:546px;height:58.700px;background:linear-gradient(#70e2b8,#52d2a2 30%,#38c690 65%,#30c08a);border:1px solid #189a68;border-top-color:#a8f0d4;border-left-color:#a8f0d4"></div><div class="a" style="left:506px;top:683px;width:1px;height:56px;background:rgba(40,180,130,.5)"></div><div class="a" style="left:555px;top:683px;width:1px;height:56px;background:rgba(40,180,130,.5)"></div><div class="a" style="left:603px;top:683px;width:1px;height:56px;background:rgba(40,180,130,.5)"></div><div class="a" style="left:652px;top:683px;width:1px;height:56px;background:rgba(40,180,130,.5)"></div><div class="a" style="left:701px;top:683px;width:1px;height:56px;background:rgba(40,180,130,.5)"></div><div class="a" style="left:744px;top:683px;width:1px;height:56px;background:rgba(40,180,130,.5)"></div><div class="a" style="left:793px;top:683px;width:1px;height:56px;background:rgba(40,180,130,.5)"></div><div class="a" style="left:841px;top:683px;width:1px;height:56px;background:rgba(40,180,130,.5)"></div><div class="a" style="left:890px;top:683px;width:1px;height:56px;background:rgba(40,180,130,.5)"></div><div class="a" style="left:939px;top:683px;width:1px;height:56px;background:rgba(40,180,130,.5)"></div><div class="a" style="left:988px;top:683px;width:1px;height:56px;background:rgba(40,180,130,.5)"></div><svg class="a" style="left:0;top:0;overflow:visible" width="1" height="1"><path d="M466 739V720.5Q468 709.5 475 707.5V739z M477.900 707.0h1V739h-1z M480.300 707.0h1.700V739h-1.700z M506 707.0h3.200V739h-3.200z M514.500 710.5h1V739h-1z M522.500 710.5h1V739h-1z" fill="#22765a" opacity=".45"/><path d="M506.0 717.5H530.6V720.5H506.0zM530.6 711.4H536.4V714.4H530.6zM536.4 714.8H543.0V717.8H536.4zM543.0 717.5H549.0V720.5H543.0zM549.0 725.6H555.0V728.6H549.0zM555.0 721.9H566.8V724.9H555.0zM566.8 715.4H578.7V718.4H566.8zM578.7 721.9H603.3V724.9H578.7zM603.3 717.5H627.7V720.5H603.3zM627.7 711.4H633.8V714.4H627.7zM633.8 714.8H640.0V717.8H633.8zM640.0 717.5H646.3V720.5H640.0zM646.3 721.9H676.7V724.9H646.3zM676.7 717.5H702.0V720.5H676.7zM702.0 715.4H714.0V718.4H702.0zM714.0 711.4H725.4V714.4H714.0zM744.4 719.9H780.6V722.9H744.4zM780.6 721.9H786.7V724.9H780.6zM786.7 719.9H805.0V722.9H786.7zM805.0 715.4H829.6V718.4H805.0zM829.6 719.9H835.0V722.9H829.6zM835.0 715.4H840.8V718.4H835.0zM840.8 721.9H854.0V724.9H840.8zM854.0 719.9H890.5V722.9H854.0zM890.5 715.4H915.0V718.4H890.5zM915.0 709.6H939.5V712.7H915.0zM939.5 711.4H963.0V714.4H939.5zM963.0 715.4H970.0V718.4H963.0zM970.0 711.4H976.0V714.4H970.0zM976.0 719.9H998.0V722.9H976.0z" fill="#22765a"/></svg><span class="pl" style="left:462px;top:686.5px;color:#0c3626">Viola</span><div class="a" style="left:457px;top:744px;width:546px;height:58.700px;background:linear-gradient(#aaea6c,#98e050 30%,#88d63a 65%,#82d034);border:1px solid #58a818;border-top-color:#ccf4a0;border-left-color:#ccf4a0"></div><div class="a" style="left:506px;top:745px;width:1px;height:56px;background:rgba(110,200,40,.5)"></div><div class="a" style="left:555px;top:745px;width:1px;height:56px;background:rgba(110,200,40,.5)"></div><div class="a" style="left:603px;top:745px;width:1px;height:56px;background:rgba(110,200,40,.5)"></div><div class="a" style="left:652px;top:745px;width:1px;height:56px;background:rgba(110,200,40,.5)"></div><div class="a" style="left:701px;top:745px;width:1px;height:56px;background:rgba(110,200,40,.5)"></div><div class="a" style="left:744px;top:745px;width:1px;height:56px;background:rgba(110,200,40,.5)"></div><div class="a" style="left:793px;top:745px;width:1px;height:56px;background:rgba(110,200,40,.5)"></div><div class="a" style="left:841px;top:745px;width:1px;height:56px;background:rgba(110,200,40,.5)"></div><div class="a" style="left:890px;top:745px;width:1px;height:56px;background:rgba(110,200,40,.5)"></div><div class="a" style="left:939px;top:745px;width:1px;height:56px;background:rgba(110,200,40,.5)"></div><div class="a" style="left:988px;top:745px;width:1px;height:56px;background:rgba(110,200,40,.5)"></div><svg class="a" style="left:0;top:0;overflow:visible" width="1" height="1"><path d="M466 801V782.5Q468 771.5 475 769.5V801z M477.900 769.0h1V801h-1z M480.300 769.0h1.700V801h-1.700z M506 769.0h3.200V801h-3.200z M514.500 772.5h1V801h-1z M522.500 772.5h1V801h-1z" fill="#568c1e" opacity=".45"/><path d="M506.0 773.9H518.5V776.9H506.0zM518.5 777.9H530.6V780.9H518.5zM530.6 783.6H543.0V786.7H530.6zM543.0 784.9H555.6V787.9H543.0zM555.6 787.9H568.0V790.9H555.6zM568.0 773.9H578.7V776.9H568.0zM578.7 776.2H603.3V779.3H578.7zM603.3 773.9H640.2V776.9H603.3zM640.0 777.9H652.4V780.9H640.0zM652.4 780.6H661.5V783.7H652.4zM661.5 783.6H665.0V786.7H661.5zM665.0 780.6H671.6V783.7H665.0zM671.6 783.6H677.7V786.7H671.6zM677.7 773.9H714.0V776.9H677.7zM714.0 770.9H725.0V773.9H714.0zM744.4 777.2H757.0V780.3H744.4zM757.0 773.9H780.6V776.9H757.0zM780.6 777.2H793.0V780.3H780.6zM793.0 773.9H817.8V776.9H793.0zM817.8 770.9H829.6V773.9H817.8zM829.6 773.9H835.0V776.9H829.6zM835.0 770.9H840.8V773.9H835.0zM840.8 777.2H866.8V780.3H840.8zM866.8 773.9H890.5V776.9H866.8zM890.5 770.9H915.0V773.9H890.5zM915.0 769.9H963.0V772.9H915.0zM963.0 767.5H970.0V770.5H963.0zM970.0 769.9H976.7V772.9H970.0zM976.7 773.9H988.5V776.9H976.7zM988.5 776.2H998.0V779.3H988.5z" fill="#568c1e"/></svg><span class="pl" style="left:462px;top:748.5px;color:#1c3608">Cello</span><div class="a" style="left:744.500px;top:372px;width:260px;height:58.700px;background:linear-gradient(#74dcdc,#58cfcf 30%,#3cc0c2 65%,#34babc);border:1px solid #1c9ea0;border-top-color:#a8f0f0;border-left-color:#a8f0f0"></div><div class="a" style="left:793px;top:373px;width:1px;height:56px;background:rgba(40,170,175,.5)"></div><div class="a" style="left:841px;top:373px;width:1px;height:56px;background:rgba(40,170,175,.5)"></div><div class="a" style="left:890px;top:373px;width:1px;height:56px;background:rgba(40,170,175,.5)"></div><div class="a" style="left:939px;top:373px;width:1px;height:56px;background:rgba(40,170,175,.5)"></div><div class="a" style="left:988px;top:373px;width:1px;height:56px;background:rgba(40,170,175,.5)"></div><svg class="a" style="left:0;top:0;overflow:visible" width="1" height="1"><path d="M746.0 401.1H756.0V404.9H746.0zM756.0 408.5H768.0V412.3H756.0zM768.0 415.1H779.7V418.9H768.0zM779.7 411.5H786.7V415.3H779.7zM786.7 409.5H793.0V413.3H786.7zM793.0 399.1H805.0V402.9H793.0zM805.0 405.3H816.8V409.1H805.0zM816.8 411.5H828.8V415.3H816.8zM828.8 409.5H835.3V413.3H828.8zM835.3 405.3H841.0V409.1H835.3zM841.0 395.5H854.0V399.3H841.0zM854.0 409.5H866.0V413.3H854.0zM866.0 391.2H878.0V395.0H866.0zM878.0 398.3H887.8V402.1H878.0zM886.5 401.1H890.5V404.9H886.5zM889.7 405.3H908.8V409.1H889.7zM927.0 415.1H930.0V418.9H927.0zM929.0 412.5H932.0V416.3H929.0zM931.0 410.5H935.5V414.3H931.0zM935.5 408.9H951.0V412.7H935.5zM951.0 419.3H957.0V423.1H951.0zM960.0 419.3H963.0V423.1H960.0zM963.0 398.8H970.5V402.6H963.0zM969.0 401.1H976.0V404.9H969.0zM975.5 405.3H982.0V409.1H975.5zM981.5 409.5H984.5V413.3H981.5zM984.0 413.5H986.0V417.3H984.0zM985.5 417.5H987.5V421.3H985.5zM987.0 420.5H989.0V424.3H987.0zM988.0 401.1H998.0V404.9H988.0z" fill="#2a7274"/></svg><span class="pl" style="left:749px;top:376.5px;color:#2c4a4e">Voice</span><div class="a" style="left:907px;top:112px;width:4px;height:125px;background:#0c1416;border-left:1px solid rgba(255,255,255,.85);border-right:1px solid rgba(255,255,255,.9)"></div><div class="a" style="left:907px;top:247px;width:4px;height:569px;background:#0c1416;border-left:1px solid rgba(255,255,255,.85);border-right:1px solid rgba(255,255,255,.9)"></div>
<div id="pop" class="a"></div><div class="a" style="left:381px;top:223px;width:1px;height:206px;background:#e2e2e2"></div><div class="a" style="left:382px;top:223px;width:1px;height:207px;background:#fff"></div><div class="a" style="left:384px;top:249px;width:170px;height:1px;background:#d8d8d8"></div><div class="a" style="left:384px;top:250px;width:170px;height:1px;background:#fff"></div><div class="a" style="left:355px;top:253px;width:22px;height:22px;border:1px solid #aecff7;border-radius:3px;background:#e8eef8"></div><svg class="a" style="left:355px;top:253px" width="22" height="22" viewBox="0 0 22 22"><path d="M7.300 10l3.400 5.300 5-10.500" fill="none" stroke="#0c1488" stroke-width="1.700"/></svg><span class="pi" style="top:228px">Use Monitored Tracks</span><span class="pi" style="top:258px">Pno</span><span class="pi" style="top:280px">Voice</span><span class="pi" style="top:302px">Voice 2</span><span class="pi" style="top:324px">Piano</span><span class="pi" style="top:346px">V1</span><span class="pi" style="top:368px">V2</span><span class="pi" style="top:390px">Viola</span><span class="pi" style="top:412px">Cello</span>
</body></html>
